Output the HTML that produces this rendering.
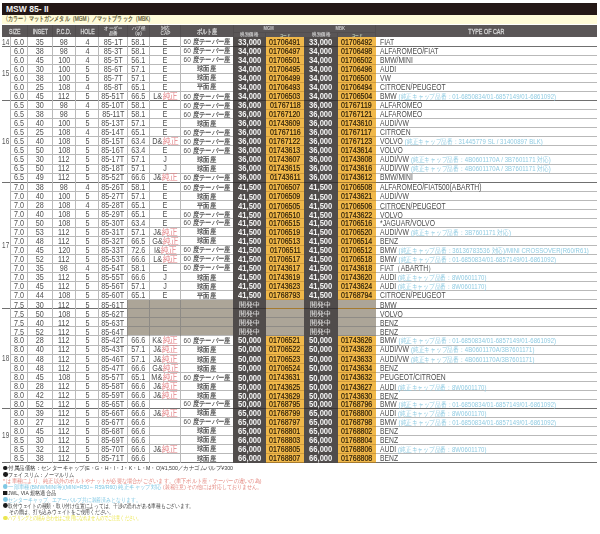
<!DOCTYPE html><html><head><meta charset="utf-8"><style>
*{margin:0;padding:0;box-sizing:border-box}
html,body{width:600px;height:534px;background:#fff;overflow:hidden;position:relative;font-family:"Liberation Sans",sans-serif}
.b{position:absolute}
.t{position:absolute;display:flex;align-items:center;white-space:nowrap;color:#505050;font-size:8.6px;line-height:1}
.t span{display:inline-block;transform:translateY(var(--dy,0px)) scaleX(var(--sx,0.84))}
.t.car span{transform-origin:left center}
.h{color:#d4d4d4;font-size:7px;font-weight:normal;--sx:0.74;--dy:1px;-webkit-text-stroke:0.3px #d8d8d8}
.toc{--sx:0.77}
.h2{color:#cfcfcf;font-size:5.2px;font-weight:bold;text-align:center;line-height:1.0;--sx:0.9}
.h3{color:#d0d0d0;font-size:4.6px;font-weight:bold;--sx:0.9;--dy:1px}
.hc{color:#c8dcc0;font-size:4.2px}
.g{font-size:8.4px;color:#555;--sx:0.76;--dy:0px}
.p{color:#f4f4f4;font-weight:bold;font-size:8.3px;--sx:0.92}
.p.dv{font-size:6.6px;font-weight:normal;--sx:1}
.c{color:#2a1d08;font-size:8.4px;--sx:0.84;-webkit-text-stroke:0.2px #2a1d08}
.cap{--sx:0.85}
.cap i{font-style:normal;color:#e27c80;margin-left:0.6px}
.seat{font-size:7.2px;--sx:0.9}
.seat b{font-weight:normal;-webkit-text-stroke:0.2px #505050}
.car{color:#4a4a4a;font-size:8.4px;--sx:0.81}
.car em{font-style:normal;color:#8fcbe2;font-size:7.4px;letter-spacing:0.1px}
.title{position:absolute;display:flex;align-items:center;color:#f2f0f0;font-weight:bold;font-size:9.2px}
.title span{display:inline-block;transform:scaleX(0.93);transform-origin:left center}
.band{position:absolute;display:flex;align-items:center;color:#58512c;font-size:6.6px;font-weight:normal;-webkit-text-stroke:0.2px #58512c}
.band span{display:inline-block;transform:scaleX(0.733);transform-origin:left center}
.f{position:absolute;left:2.5px;height:8px;font-size:5.8px;color:#3a3a3a;white-space:nowrap;line-height:8px}
.f span{display:inline-block;transform-origin:left center}
.f b{font-weight:normal}
.bu,.sq{display:inline-block;width:4.8px;height:4.8px;border-radius:50%;background:currentColor;margin-right:0.6px;vertical-align:-0.2px}
.sq{border-radius:0;width:4.4px;height:4.4px}
.k{color:#1a1a1a}
.pk{color:#e4877f}
.bl{color:#80c8e4}
.yl{color:#ebe64e}
#wrap{position:absolute;left:0;top:0;width:600px;height:534px;filter:blur(0.3px)}</style></head><body><div id="wrap"><div class="b" style="left:2.00px;top:2.60px;width:595.00px;height:12.30px;background:#241816;"></div>
<div class="title" style="left:6px;top:2.5px;height:12px;"><span>MSW 85- II</span></div>
<div class="b" style="left:2.00px;top:14.90px;width:595.00px;height:9.60px;background:#fffbd8;"></div>
<div class="band" style="left:3px;top:15px;height:9.5px;"><span>〈カラー〉マットガンメタル（MGM）／マットブラック（MBK）</span></div>
<div class="b" style="left:2.00px;top:24.50px;width:595.00px;height:12.80px;background:#5a5657;"></div>
<div class="b" style="left:26.80px;top:24.50px;width:1.00px;height:12.80px;background:#524e4f;"></div>
<div class="b" style="left:52.40px;top:24.50px;width:1.00px;height:12.80px;background:#524e4f;"></div>
<div class="b" style="left:74.80px;top:24.50px;width:1.00px;height:12.80px;background:#524e4f;"></div>
<div class="b" style="left:98.30px;top:24.50px;width:1.00px;height:12.80px;background:#524e4f;"></div>
<div class="b" style="left:126.50px;top:24.50px;width:1.00px;height:12.80px;background:#524e4f;"></div>
<div class="b" style="left:149.10px;top:24.50px;width:1.00px;height:12.80px;background:#524e4f;"></div>
<div class="b" style="left:180.30px;top:24.50px;width:1.00px;height:12.80px;background:#524e4f;"></div>
<div class="b" style="left:232.50px;top:24.50px;width:1.00px;height:12.80px;background:#524e4f;"></div>
<div class="b" style="left:375.20px;top:24.50px;width:1.00px;height:12.80px;background:#524e4f;"></div>
<div class="b" style="left:265.30px;top:32.00px;width:1.00px;height:5.30px;background:#524e4f;"></div>
<div class="b" style="left:337.30px;top:32.00px;width:1.00px;height:5.30px;background:#524e4f;"></div>
<div class="b" style="left:233.00px;top:31.50px;width:142.70px;height:1.00px;background:#524e4f;"></div>
<div class="t h" style="left:2.00px;top:24.50px;width:25.30px;height:12.80px;justify-content:center;"><span>SIZE</span></div>
<div class="t h" style="left:27.30px;top:24.50px;width:25.60px;height:12.80px;justify-content:center;"><span>INSET</span></div>
<div class="t h" style="left:52.90px;top:24.50px;width:22.40px;height:12.80px;justify-content:center;"><span>P.C.D.</span></div>
<div class="t h" style="left:75.30px;top:24.50px;width:23.50px;height:12.80px;justify-content:center;"><span>HOLE</span></div>
<div class="t h2" style="left:98.80px;top:24.50px;width:28.20px;height:12.80px;justify-content:center;"><span>オーダー<br>品番</span></div>
<div class="t h2" style="left:127.00px;top:24.50px;width:22.60px;height:12.80px;justify-content:center;"><span>ハブ径<br>(φ)</span></div>
<div class="t h2" style="left:149.60px;top:24.50px;width:31.20px;height:12.80px;justify-content:center;"><span>対応<br>CAP</span></div>
<div class="t h" style="left:180.80px;top:24.50px;width:52.20px;height:12.80px;justify-content:center;"><span>ボルト座</span></div>
<div class="t h3" style="left:233.00px;top:24.50px;width:71.00px;height:7.50px;justify-content:center;"><span>MGM</span></div>
<div class="t h3" style="left:304.00px;top:24.50px;width:71.70px;height:7.50px;justify-content:center;"><span>MBK</span></div>
<div class="t h3" style="left:233.00px;top:32.00px;width:32.80px;height:5.30px;justify-content:center;"><span>税別価格</span></div>
<div class="t h3 hc" style="left:265.80px;top:32.00px;width:38.20px;height:5.30px;justify-content:center;"><span>コード</span></div>
<div class="t h3" style="left:304.00px;top:32.00px;width:33.80px;height:5.30px;justify-content:center;"><span>税別価格</span></div>
<div class="t h3 hc" style="left:337.80px;top:32.00px;width:37.90px;height:5.30px;justify-content:center;"><span>コード</span></div>
<div class="t h toc" style="left:375.70px;top:24.50px;width:221.30px;height:12.80px;justify-content:center;"><span>TYPE OF CAR</span></div>
<div class="b" style="left:265.80px;top:37.30px;width:38.20px;height:9.05px;background:#f0b84a;"></div>
<div class="b" style="left:337.80px;top:37.30px;width:37.90px;height:9.05px;background:#f0b84a;"></div>
<div class="b" style="left:265.80px;top:46.35px;width:38.20px;height:9.05px;background:#f0b84a;"></div>
<div class="b" style="left:337.80px;top:46.35px;width:37.90px;height:9.05px;background:#f0b84a;"></div>
<div class="b" style="left:265.80px;top:55.40px;width:38.20px;height:9.05px;background:#f0b84a;"></div>
<div class="b" style="left:337.80px;top:55.40px;width:37.90px;height:9.05px;background:#f0b84a;"></div>
<div class="b" style="left:265.80px;top:64.45px;width:38.20px;height:9.05px;background:#f0b84a;"></div>
<div class="b" style="left:337.80px;top:64.45px;width:37.90px;height:9.05px;background:#f0b84a;"></div>
<div class="b" style="left:265.80px;top:73.50px;width:38.20px;height:9.05px;background:#f0b84a;"></div>
<div class="b" style="left:337.80px;top:73.50px;width:37.90px;height:9.05px;background:#f0b84a;"></div>
<div class="b" style="left:265.80px;top:82.55px;width:38.20px;height:9.05px;background:#f0b84a;"></div>
<div class="b" style="left:337.80px;top:82.55px;width:37.90px;height:9.05px;background:#f0b84a;"></div>
<div class="b" style="left:265.80px;top:91.60px;width:38.20px;height:9.05px;background:#f0b84a;"></div>
<div class="b" style="left:337.80px;top:91.60px;width:37.90px;height:9.05px;background:#f0b84a;"></div>
<div class="b" style="left:265.80px;top:100.65px;width:38.20px;height:9.05px;background:#f0b84a;"></div>
<div class="b" style="left:337.80px;top:100.65px;width:37.90px;height:9.05px;background:#f0b84a;"></div>
<div class="b" style="left:265.80px;top:109.70px;width:38.20px;height:9.05px;background:#f0b84a;"></div>
<div class="b" style="left:337.80px;top:109.70px;width:37.90px;height:9.05px;background:#f0b84a;"></div>
<div class="b" style="left:265.80px;top:118.75px;width:38.20px;height:9.05px;background:#f0b84a;"></div>
<div class="b" style="left:337.80px;top:118.75px;width:37.90px;height:9.05px;background:#f0b84a;"></div>
<div class="b" style="left:265.80px;top:127.80px;width:38.20px;height:9.05px;background:#f0b84a;"></div>
<div class="b" style="left:337.80px;top:127.80px;width:37.90px;height:9.05px;background:#f0b84a;"></div>
<div class="b" style="left:265.80px;top:136.85px;width:38.20px;height:9.05px;background:#f0b84a;"></div>
<div class="b" style="left:337.80px;top:136.85px;width:37.90px;height:9.05px;background:#f0b84a;"></div>
<div class="b" style="left:265.80px;top:145.90px;width:38.20px;height:9.05px;background:#f0b84a;"></div>
<div class="b" style="left:337.80px;top:145.90px;width:37.90px;height:9.05px;background:#f0b84a;"></div>
<div class="b" style="left:265.80px;top:154.95px;width:38.20px;height:9.05px;background:#f0b84a;"></div>
<div class="b" style="left:337.80px;top:154.95px;width:37.90px;height:9.05px;background:#f0b84a;"></div>
<div class="b" style="left:265.80px;top:164.00px;width:38.20px;height:9.05px;background:#f0b84a;"></div>
<div class="b" style="left:337.80px;top:164.00px;width:37.90px;height:9.05px;background:#f0b84a;"></div>
<div class="b" style="left:265.80px;top:173.05px;width:38.20px;height:9.05px;background:#f0b84a;"></div>
<div class="b" style="left:337.80px;top:173.05px;width:37.90px;height:9.05px;background:#f0b84a;"></div>
<div class="b" style="left:265.80px;top:182.10px;width:38.20px;height:9.05px;background:#f0b84a;"></div>
<div class="b" style="left:337.80px;top:182.10px;width:37.90px;height:9.05px;background:#f0b84a;"></div>
<div class="b" style="left:265.80px;top:191.15px;width:38.20px;height:9.05px;background:#f0b84a;"></div>
<div class="b" style="left:337.80px;top:191.15px;width:37.90px;height:9.05px;background:#f0b84a;"></div>
<div class="b" style="left:265.80px;top:200.20px;width:38.20px;height:9.05px;background:#f0b84a;"></div>
<div class="b" style="left:337.80px;top:200.20px;width:37.90px;height:9.05px;background:#f0b84a;"></div>
<div class="b" style="left:265.80px;top:209.25px;width:38.20px;height:9.05px;background:#f0b84a;"></div>
<div class="b" style="left:337.80px;top:209.25px;width:37.90px;height:9.05px;background:#f0b84a;"></div>
<div class="b" style="left:265.80px;top:218.30px;width:38.20px;height:9.05px;background:#f0b84a;"></div>
<div class="b" style="left:337.80px;top:218.30px;width:37.90px;height:9.05px;background:#f0b84a;"></div>
<div class="b" style="left:265.80px;top:227.35px;width:38.20px;height:9.05px;background:#f0b84a;"></div>
<div class="b" style="left:337.80px;top:227.35px;width:37.90px;height:9.05px;background:#f0b84a;"></div>
<div class="b" style="left:265.80px;top:236.40px;width:38.20px;height:9.05px;background:#f0b84a;"></div>
<div class="b" style="left:337.80px;top:236.40px;width:37.90px;height:9.05px;background:#f0b84a;"></div>
<div class="b" style="left:265.80px;top:245.45px;width:38.20px;height:9.05px;background:#f0b84a;"></div>
<div class="b" style="left:337.80px;top:245.45px;width:37.90px;height:9.05px;background:#f0b84a;"></div>
<div class="b" style="left:265.80px;top:254.50px;width:38.20px;height:9.05px;background:#f0b84a;"></div>
<div class="b" style="left:337.80px;top:254.50px;width:37.90px;height:9.05px;background:#f0b84a;"></div>
<div class="b" style="left:265.80px;top:263.55px;width:38.20px;height:9.05px;background:#f0b84a;"></div>
<div class="b" style="left:337.80px;top:263.55px;width:37.90px;height:9.05px;background:#f0b84a;"></div>
<div class="b" style="left:265.80px;top:272.60px;width:38.20px;height:9.05px;background:#f0b84a;"></div>
<div class="b" style="left:337.80px;top:272.60px;width:37.90px;height:9.05px;background:#f0b84a;"></div>
<div class="b" style="left:265.80px;top:281.65px;width:38.20px;height:9.05px;background:#f0b84a;"></div>
<div class="b" style="left:337.80px;top:281.65px;width:37.90px;height:9.05px;background:#f0b84a;"></div>
<div class="b" style="left:265.80px;top:290.70px;width:38.20px;height:9.05px;background:#f0b84a;"></div>
<div class="b" style="left:337.80px;top:290.70px;width:37.90px;height:9.05px;background:#f0b84a;"></div>
<div class="b" style="left:127.00px;top:299.75px;width:106.00px;height:9.05px;background:#aca598;"></div>
<div class="b" style="left:265.80px;top:299.75px;width:38.20px;height:9.05px;background:#aca598;"></div>
<div class="b" style="left:337.80px;top:299.75px;width:37.90px;height:9.05px;background:#aca598;"></div>
<div class="b" style="left:127.00px;top:308.80px;width:106.00px;height:9.05px;background:#aca598;"></div>
<div class="b" style="left:265.80px;top:308.80px;width:38.20px;height:9.05px;background:#aca598;"></div>
<div class="b" style="left:337.80px;top:308.80px;width:37.90px;height:9.05px;background:#aca598;"></div>
<div class="b" style="left:127.00px;top:317.85px;width:106.00px;height:9.05px;background:#aca598;"></div>
<div class="b" style="left:265.80px;top:317.85px;width:38.20px;height:9.05px;background:#aca598;"></div>
<div class="b" style="left:337.80px;top:317.85px;width:37.90px;height:9.05px;background:#aca598;"></div>
<div class="b" style="left:127.00px;top:326.90px;width:106.00px;height:9.05px;background:#aca598;"></div>
<div class="b" style="left:265.80px;top:326.90px;width:38.20px;height:9.05px;background:#aca598;"></div>
<div class="b" style="left:337.80px;top:326.90px;width:37.90px;height:9.05px;background:#aca598;"></div>
<div class="b" style="left:265.80px;top:335.95px;width:38.20px;height:9.05px;background:#f0b84a;"></div>
<div class="b" style="left:337.80px;top:335.95px;width:37.90px;height:9.05px;background:#f0b84a;"></div>
<div class="b" style="left:265.80px;top:345.00px;width:38.20px;height:9.05px;background:#f0b84a;"></div>
<div class="b" style="left:337.80px;top:345.00px;width:37.90px;height:9.05px;background:#f0b84a;"></div>
<div class="b" style="left:265.80px;top:354.05px;width:38.20px;height:9.05px;background:#f0b84a;"></div>
<div class="b" style="left:337.80px;top:354.05px;width:37.90px;height:9.05px;background:#f0b84a;"></div>
<div class="b" style="left:265.80px;top:363.10px;width:38.20px;height:9.05px;background:#f0b84a;"></div>
<div class="b" style="left:337.80px;top:363.10px;width:37.90px;height:9.05px;background:#f0b84a;"></div>
<div class="b" style="left:265.80px;top:372.15px;width:38.20px;height:9.05px;background:#f0b84a;"></div>
<div class="b" style="left:337.80px;top:372.15px;width:37.90px;height:9.05px;background:#f0b84a;"></div>
<div class="b" style="left:265.80px;top:381.20px;width:38.20px;height:9.05px;background:#f0b84a;"></div>
<div class="b" style="left:337.80px;top:381.20px;width:37.90px;height:9.05px;background:#f0b84a;"></div>
<div class="b" style="left:265.80px;top:390.25px;width:38.20px;height:9.05px;background:#f0b84a;"></div>
<div class="b" style="left:337.80px;top:390.25px;width:37.90px;height:9.05px;background:#f0b84a;"></div>
<div class="b" style="left:265.80px;top:399.30px;width:38.20px;height:9.05px;background:#f0b84a;"></div>
<div class="b" style="left:337.80px;top:399.30px;width:37.90px;height:9.05px;background:#f0b84a;"></div>
<div class="b" style="left:265.80px;top:408.35px;width:38.20px;height:9.05px;background:#f0b84a;"></div>
<div class="b" style="left:337.80px;top:408.35px;width:37.90px;height:9.05px;background:#f0b84a;"></div>
<div class="b" style="left:265.80px;top:417.40px;width:38.20px;height:9.05px;background:#f0b84a;"></div>
<div class="b" style="left:337.80px;top:417.40px;width:37.90px;height:9.05px;background:#f0b84a;"></div>
<div class="b" style="left:265.80px;top:426.45px;width:38.20px;height:9.05px;background:#f0b84a;"></div>
<div class="b" style="left:337.80px;top:426.45px;width:37.90px;height:9.05px;background:#f0b84a;"></div>
<div class="b" style="left:265.80px;top:435.50px;width:38.20px;height:9.05px;background:#f0b84a;"></div>
<div class="b" style="left:337.80px;top:435.50px;width:37.90px;height:9.05px;background:#f0b84a;"></div>
<div class="b" style="left:265.80px;top:444.55px;width:38.20px;height:9.05px;background:#f0b84a;"></div>
<div class="b" style="left:337.80px;top:444.55px;width:37.90px;height:9.05px;background:#f0b84a;"></div>
<div class="b" style="left:265.80px;top:453.60px;width:38.20px;height:9.05px;background:#f0b84a;"></div>
<div class="b" style="left:337.80px;top:453.60px;width:37.90px;height:9.05px;background:#f0b84a;"></div>
<div class="b" style="left:233.00px;top:37.30px;width:32.80px;height:425.35px;background:#504c4b;"></div>
<div class="b" style="left:304.00px;top:37.30px;width:33.80px;height:425.35px;background:#504c4b;"></div>
<div class="b" style="left:2.00px;top:45.85px;width:231.00px;height:1.00px;background:#707070;"></div>
<div class="b" style="left:265.80px;top:45.85px;width:38.20px;height:1.00px;background:#a57a30;"></div>
<div class="b" style="left:337.80px;top:45.85px;width:37.90px;height:1.00px;background:#a57a30;"></div>
<div class="b" style="left:375.70px;top:45.85px;width:221.30px;height:1.00px;background:#707070;"></div>
<div class="b" style="left:233.00px;top:45.85px;width:32.80px;height:1.00px;background:#383434;"></div>
<div class="b" style="left:304.00px;top:45.85px;width:33.80px;height:1.00px;background:#383434;"></div>
<div class="b" style="left:10.30px;top:54.90px;width:222.70px;height:1.00px;background:#b9b9b9;"></div>
<div class="b" style="left:265.80px;top:54.90px;width:38.20px;height:1.00px;background:#cf9a3c;"></div>
<div class="b" style="left:337.80px;top:54.90px;width:37.90px;height:1.00px;background:#cf9a3c;"></div>
<div class="b" style="left:375.70px;top:54.90px;width:221.30px;height:1.00px;background:#b9b9b9;"></div>
<div class="b" style="left:10.30px;top:63.95px;width:222.70px;height:1.00px;background:#b9b9b9;"></div>
<div class="b" style="left:265.80px;top:63.95px;width:38.20px;height:1.00px;background:#cf9a3c;"></div>
<div class="b" style="left:337.80px;top:63.95px;width:37.90px;height:1.00px;background:#cf9a3c;"></div>
<div class="b" style="left:375.70px;top:63.95px;width:221.30px;height:1.00px;background:#b9b9b9;"></div>
<div class="b" style="left:10.30px;top:73.00px;width:222.70px;height:1.00px;background:#b9b9b9;"></div>
<div class="b" style="left:265.80px;top:73.00px;width:38.20px;height:1.00px;background:#cf9a3c;"></div>
<div class="b" style="left:337.80px;top:73.00px;width:37.90px;height:1.00px;background:#cf9a3c;"></div>
<div class="b" style="left:375.70px;top:73.00px;width:221.30px;height:1.00px;background:#b9b9b9;"></div>
<div class="b" style="left:10.30px;top:82.05px;width:222.70px;height:1.00px;background:#b9b9b9;"></div>
<div class="b" style="left:265.80px;top:82.05px;width:38.20px;height:1.00px;background:#cf9a3c;"></div>
<div class="b" style="left:337.80px;top:82.05px;width:37.90px;height:1.00px;background:#cf9a3c;"></div>
<div class="b" style="left:375.70px;top:82.05px;width:221.30px;height:1.00px;background:#b9b9b9;"></div>
<div class="b" style="left:10.30px;top:91.10px;width:222.70px;height:1.00px;background:#b9b9b9;"></div>
<div class="b" style="left:265.80px;top:91.10px;width:38.20px;height:1.00px;background:#cf9a3c;"></div>
<div class="b" style="left:337.80px;top:91.10px;width:37.90px;height:1.00px;background:#cf9a3c;"></div>
<div class="b" style="left:375.70px;top:91.10px;width:221.30px;height:1.00px;background:#b9b9b9;"></div>
<div class="b" style="left:2.00px;top:100.15px;width:231.00px;height:1.00px;background:#707070;"></div>
<div class="b" style="left:265.80px;top:100.15px;width:38.20px;height:1.00px;background:#a57a30;"></div>
<div class="b" style="left:337.80px;top:100.15px;width:37.90px;height:1.00px;background:#a57a30;"></div>
<div class="b" style="left:375.70px;top:100.15px;width:221.30px;height:1.00px;background:#707070;"></div>
<div class="b" style="left:233.00px;top:100.15px;width:32.80px;height:1.00px;background:#383434;"></div>
<div class="b" style="left:304.00px;top:100.15px;width:33.80px;height:1.00px;background:#383434;"></div>
<div class="b" style="left:10.30px;top:109.20px;width:222.70px;height:1.00px;background:#b9b9b9;"></div>
<div class="b" style="left:265.80px;top:109.20px;width:38.20px;height:1.00px;background:#cf9a3c;"></div>
<div class="b" style="left:337.80px;top:109.20px;width:37.90px;height:1.00px;background:#cf9a3c;"></div>
<div class="b" style="left:375.70px;top:109.20px;width:221.30px;height:1.00px;background:#b9b9b9;"></div>
<div class="b" style="left:10.30px;top:118.25px;width:222.70px;height:1.00px;background:#b9b9b9;"></div>
<div class="b" style="left:265.80px;top:118.25px;width:38.20px;height:1.00px;background:#cf9a3c;"></div>
<div class="b" style="left:337.80px;top:118.25px;width:37.90px;height:1.00px;background:#cf9a3c;"></div>
<div class="b" style="left:375.70px;top:118.25px;width:221.30px;height:1.00px;background:#b9b9b9;"></div>
<div class="b" style="left:10.30px;top:127.30px;width:222.70px;height:1.00px;background:#b9b9b9;"></div>
<div class="b" style="left:265.80px;top:127.30px;width:38.20px;height:1.00px;background:#cf9a3c;"></div>
<div class="b" style="left:337.80px;top:127.30px;width:37.90px;height:1.00px;background:#cf9a3c;"></div>
<div class="b" style="left:375.70px;top:127.30px;width:221.30px;height:1.00px;background:#b9b9b9;"></div>
<div class="b" style="left:10.30px;top:136.35px;width:222.70px;height:1.00px;background:#b9b9b9;"></div>
<div class="b" style="left:265.80px;top:136.35px;width:38.20px;height:1.00px;background:#cf9a3c;"></div>
<div class="b" style="left:337.80px;top:136.35px;width:37.90px;height:1.00px;background:#cf9a3c;"></div>
<div class="b" style="left:375.70px;top:136.35px;width:221.30px;height:1.00px;background:#b9b9b9;"></div>
<div class="b" style="left:10.30px;top:145.40px;width:222.70px;height:1.00px;background:#b9b9b9;"></div>
<div class="b" style="left:265.80px;top:145.40px;width:38.20px;height:1.00px;background:#cf9a3c;"></div>
<div class="b" style="left:337.80px;top:145.40px;width:37.90px;height:1.00px;background:#cf9a3c;"></div>
<div class="b" style="left:375.70px;top:145.40px;width:221.30px;height:1.00px;background:#b9b9b9;"></div>
<div class="b" style="left:10.30px;top:154.45px;width:222.70px;height:1.00px;background:#b9b9b9;"></div>
<div class="b" style="left:265.80px;top:154.45px;width:38.20px;height:1.00px;background:#cf9a3c;"></div>
<div class="b" style="left:337.80px;top:154.45px;width:37.90px;height:1.00px;background:#cf9a3c;"></div>
<div class="b" style="left:375.70px;top:154.45px;width:221.30px;height:1.00px;background:#b9b9b9;"></div>
<div class="b" style="left:10.30px;top:163.50px;width:222.70px;height:1.00px;background:#b9b9b9;"></div>
<div class="b" style="left:265.80px;top:163.50px;width:38.20px;height:1.00px;background:#cf9a3c;"></div>
<div class="b" style="left:337.80px;top:163.50px;width:37.90px;height:1.00px;background:#cf9a3c;"></div>
<div class="b" style="left:375.70px;top:163.50px;width:221.30px;height:1.00px;background:#b9b9b9;"></div>
<div class="b" style="left:10.30px;top:172.55px;width:222.70px;height:1.00px;background:#b9b9b9;"></div>
<div class="b" style="left:265.80px;top:172.55px;width:38.20px;height:1.00px;background:#cf9a3c;"></div>
<div class="b" style="left:337.80px;top:172.55px;width:37.90px;height:1.00px;background:#cf9a3c;"></div>
<div class="b" style="left:375.70px;top:172.55px;width:221.30px;height:1.00px;background:#b9b9b9;"></div>
<div class="b" style="left:2.00px;top:181.60px;width:231.00px;height:1.00px;background:#707070;"></div>
<div class="b" style="left:265.80px;top:181.60px;width:38.20px;height:1.00px;background:#a57a30;"></div>
<div class="b" style="left:337.80px;top:181.60px;width:37.90px;height:1.00px;background:#a57a30;"></div>
<div class="b" style="left:375.70px;top:181.60px;width:221.30px;height:1.00px;background:#707070;"></div>
<div class="b" style="left:233.00px;top:181.60px;width:32.80px;height:1.00px;background:#383434;"></div>
<div class="b" style="left:304.00px;top:181.60px;width:33.80px;height:1.00px;background:#383434;"></div>
<div class="b" style="left:10.30px;top:190.65px;width:222.70px;height:1.00px;background:#b9b9b9;"></div>
<div class="b" style="left:265.80px;top:190.65px;width:38.20px;height:1.00px;background:#cf9a3c;"></div>
<div class="b" style="left:337.80px;top:190.65px;width:37.90px;height:1.00px;background:#cf9a3c;"></div>
<div class="b" style="left:375.70px;top:190.65px;width:221.30px;height:1.00px;background:#b9b9b9;"></div>
<div class="b" style="left:10.30px;top:199.70px;width:222.70px;height:1.00px;background:#b9b9b9;"></div>
<div class="b" style="left:265.80px;top:199.70px;width:38.20px;height:1.00px;background:#cf9a3c;"></div>
<div class="b" style="left:337.80px;top:199.70px;width:37.90px;height:1.00px;background:#cf9a3c;"></div>
<div class="b" style="left:375.70px;top:199.70px;width:221.30px;height:1.00px;background:#b9b9b9;"></div>
<div class="b" style="left:10.30px;top:208.75px;width:222.70px;height:1.00px;background:#b9b9b9;"></div>
<div class="b" style="left:265.80px;top:208.75px;width:38.20px;height:1.00px;background:#cf9a3c;"></div>
<div class="b" style="left:337.80px;top:208.75px;width:37.90px;height:1.00px;background:#cf9a3c;"></div>
<div class="b" style="left:375.70px;top:208.75px;width:221.30px;height:1.00px;background:#b9b9b9;"></div>
<div class="b" style="left:10.30px;top:217.80px;width:222.70px;height:1.00px;background:#b9b9b9;"></div>
<div class="b" style="left:265.80px;top:217.80px;width:38.20px;height:1.00px;background:#cf9a3c;"></div>
<div class="b" style="left:337.80px;top:217.80px;width:37.90px;height:1.00px;background:#cf9a3c;"></div>
<div class="b" style="left:375.70px;top:217.80px;width:221.30px;height:1.00px;background:#b9b9b9;"></div>
<div class="b" style="left:10.30px;top:226.85px;width:222.70px;height:1.00px;background:#b9b9b9;"></div>
<div class="b" style="left:265.80px;top:226.85px;width:38.20px;height:1.00px;background:#cf9a3c;"></div>
<div class="b" style="left:337.80px;top:226.85px;width:37.90px;height:1.00px;background:#cf9a3c;"></div>
<div class="b" style="left:375.70px;top:226.85px;width:221.30px;height:1.00px;background:#b9b9b9;"></div>
<div class="b" style="left:10.30px;top:235.90px;width:222.70px;height:1.00px;background:#b9b9b9;"></div>
<div class="b" style="left:265.80px;top:235.90px;width:38.20px;height:1.00px;background:#cf9a3c;"></div>
<div class="b" style="left:337.80px;top:235.90px;width:37.90px;height:1.00px;background:#cf9a3c;"></div>
<div class="b" style="left:375.70px;top:235.90px;width:221.30px;height:1.00px;background:#b9b9b9;"></div>
<div class="b" style="left:10.30px;top:244.95px;width:222.70px;height:1.00px;background:#b9b9b9;"></div>
<div class="b" style="left:265.80px;top:244.95px;width:38.20px;height:1.00px;background:#cf9a3c;"></div>
<div class="b" style="left:337.80px;top:244.95px;width:37.90px;height:1.00px;background:#cf9a3c;"></div>
<div class="b" style="left:375.70px;top:244.95px;width:221.30px;height:1.00px;background:#b9b9b9;"></div>
<div class="b" style="left:10.30px;top:254.00px;width:222.70px;height:1.00px;background:#b9b9b9;"></div>
<div class="b" style="left:265.80px;top:254.00px;width:38.20px;height:1.00px;background:#cf9a3c;"></div>
<div class="b" style="left:337.80px;top:254.00px;width:37.90px;height:1.00px;background:#cf9a3c;"></div>
<div class="b" style="left:375.70px;top:254.00px;width:221.30px;height:1.00px;background:#b9b9b9;"></div>
<div class="b" style="left:10.30px;top:263.05px;width:222.70px;height:1.00px;background:#b9b9b9;"></div>
<div class="b" style="left:265.80px;top:263.05px;width:38.20px;height:1.00px;background:#cf9a3c;"></div>
<div class="b" style="left:337.80px;top:263.05px;width:37.90px;height:1.00px;background:#cf9a3c;"></div>
<div class="b" style="left:375.70px;top:263.05px;width:221.30px;height:1.00px;background:#b9b9b9;"></div>
<div class="b" style="left:10.30px;top:272.10px;width:222.70px;height:1.00px;background:#b9b9b9;"></div>
<div class="b" style="left:265.80px;top:272.10px;width:38.20px;height:1.00px;background:#cf9a3c;"></div>
<div class="b" style="left:337.80px;top:272.10px;width:37.90px;height:1.00px;background:#cf9a3c;"></div>
<div class="b" style="left:375.70px;top:272.10px;width:221.30px;height:1.00px;background:#b9b9b9;"></div>
<div class="b" style="left:10.30px;top:281.15px;width:222.70px;height:1.00px;background:#b9b9b9;"></div>
<div class="b" style="left:265.80px;top:281.15px;width:38.20px;height:1.00px;background:#cf9a3c;"></div>
<div class="b" style="left:337.80px;top:281.15px;width:37.90px;height:1.00px;background:#cf9a3c;"></div>
<div class="b" style="left:375.70px;top:281.15px;width:221.30px;height:1.00px;background:#b9b9b9;"></div>
<div class="b" style="left:10.30px;top:290.20px;width:222.70px;height:1.00px;background:#b9b9b9;"></div>
<div class="b" style="left:265.80px;top:290.20px;width:38.20px;height:1.00px;background:#cf9a3c;"></div>
<div class="b" style="left:337.80px;top:290.20px;width:37.90px;height:1.00px;background:#cf9a3c;"></div>
<div class="b" style="left:375.70px;top:290.20px;width:221.30px;height:1.00px;background:#b9b9b9;"></div>
<div class="b" style="left:10.30px;top:299.25px;width:222.70px;height:1.00px;background:#b9b9b9;"></div>
<div class="b" style="left:265.80px;top:299.25px;width:38.20px;height:1.00px;background:#cf9a3c;"></div>
<div class="b" style="left:337.80px;top:299.25px;width:37.90px;height:1.00px;background:#cf9a3c;"></div>
<div class="b" style="left:375.70px;top:299.25px;width:221.30px;height:1.00px;background:#b9b9b9;"></div>
<div class="b" style="left:2.00px;top:308.30px;width:231.00px;height:1.00px;background:#707070;"></div>
<div class="b" style="left:265.80px;top:308.30px;width:38.20px;height:1.00px;background:#a57a30;"></div>
<div class="b" style="left:337.80px;top:308.30px;width:37.90px;height:1.00px;background:#a57a30;"></div>
<div class="b" style="left:375.70px;top:308.30px;width:221.30px;height:1.00px;background:#707070;"></div>
<div class="b" style="left:233.00px;top:308.30px;width:32.80px;height:1.00px;background:#383434;"></div>
<div class="b" style="left:304.00px;top:308.30px;width:33.80px;height:1.00px;background:#383434;"></div>
<div class="b" style="left:10.30px;top:317.35px;width:222.70px;height:1.00px;background:#b9b9b9;"></div>
<div class="b" style="left:265.80px;top:317.35px;width:38.20px;height:1.00px;background:#8e8b86;"></div>
<div class="b" style="left:337.80px;top:317.35px;width:37.90px;height:1.00px;background:#8e8b86;"></div>
<div class="b" style="left:375.70px;top:317.35px;width:221.30px;height:1.00px;background:#b9b9b9;"></div>
<div class="b" style="left:10.30px;top:326.40px;width:222.70px;height:1.00px;background:#b9b9b9;"></div>
<div class="b" style="left:265.80px;top:326.40px;width:38.20px;height:1.00px;background:#8e8b86;"></div>
<div class="b" style="left:337.80px;top:326.40px;width:37.90px;height:1.00px;background:#8e8b86;"></div>
<div class="b" style="left:375.70px;top:326.40px;width:221.30px;height:1.00px;background:#b9b9b9;"></div>
<div class="b" style="left:10.30px;top:335.45px;width:222.70px;height:1.00px;background:#b9b9b9;"></div>
<div class="b" style="left:265.80px;top:335.45px;width:38.20px;height:1.00px;background:#8e8b86;"></div>
<div class="b" style="left:337.80px;top:335.45px;width:37.90px;height:1.00px;background:#8e8b86;"></div>
<div class="b" style="left:375.70px;top:335.45px;width:221.30px;height:1.00px;background:#b9b9b9;"></div>
<div class="b" style="left:10.30px;top:344.50px;width:222.70px;height:1.00px;background:#b9b9b9;"></div>
<div class="b" style="left:265.80px;top:344.50px;width:38.20px;height:1.00px;background:#cf9a3c;"></div>
<div class="b" style="left:337.80px;top:344.50px;width:37.90px;height:1.00px;background:#cf9a3c;"></div>
<div class="b" style="left:375.70px;top:344.50px;width:221.30px;height:1.00px;background:#b9b9b9;"></div>
<div class="b" style="left:10.30px;top:353.55px;width:222.70px;height:1.00px;background:#b9b9b9;"></div>
<div class="b" style="left:265.80px;top:353.55px;width:38.20px;height:1.00px;background:#cf9a3c;"></div>
<div class="b" style="left:337.80px;top:353.55px;width:37.90px;height:1.00px;background:#cf9a3c;"></div>
<div class="b" style="left:375.70px;top:353.55px;width:221.30px;height:1.00px;background:#b9b9b9;"></div>
<div class="b" style="left:10.30px;top:362.60px;width:222.70px;height:1.00px;background:#b9b9b9;"></div>
<div class="b" style="left:265.80px;top:362.60px;width:38.20px;height:1.00px;background:#cf9a3c;"></div>
<div class="b" style="left:337.80px;top:362.60px;width:37.90px;height:1.00px;background:#cf9a3c;"></div>
<div class="b" style="left:375.70px;top:362.60px;width:221.30px;height:1.00px;background:#b9b9b9;"></div>
<div class="b" style="left:10.30px;top:371.65px;width:222.70px;height:1.00px;background:#b9b9b9;"></div>
<div class="b" style="left:265.80px;top:371.65px;width:38.20px;height:1.00px;background:#cf9a3c;"></div>
<div class="b" style="left:337.80px;top:371.65px;width:37.90px;height:1.00px;background:#cf9a3c;"></div>
<div class="b" style="left:375.70px;top:371.65px;width:221.30px;height:1.00px;background:#b9b9b9;"></div>
<div class="b" style="left:10.30px;top:380.70px;width:222.70px;height:1.00px;background:#b9b9b9;"></div>
<div class="b" style="left:265.80px;top:380.70px;width:38.20px;height:1.00px;background:#cf9a3c;"></div>
<div class="b" style="left:337.80px;top:380.70px;width:37.90px;height:1.00px;background:#cf9a3c;"></div>
<div class="b" style="left:375.70px;top:380.70px;width:221.30px;height:1.00px;background:#b9b9b9;"></div>
<div class="b" style="left:10.30px;top:389.75px;width:222.70px;height:1.00px;background:#b9b9b9;"></div>
<div class="b" style="left:265.80px;top:389.75px;width:38.20px;height:1.00px;background:#cf9a3c;"></div>
<div class="b" style="left:337.80px;top:389.75px;width:37.90px;height:1.00px;background:#cf9a3c;"></div>
<div class="b" style="left:375.70px;top:389.75px;width:221.30px;height:1.00px;background:#b9b9b9;"></div>
<div class="b" style="left:10.30px;top:398.80px;width:222.70px;height:1.00px;background:#b9b9b9;"></div>
<div class="b" style="left:265.80px;top:398.80px;width:38.20px;height:1.00px;background:#cf9a3c;"></div>
<div class="b" style="left:337.80px;top:398.80px;width:37.90px;height:1.00px;background:#cf9a3c;"></div>
<div class="b" style="left:375.70px;top:398.80px;width:221.30px;height:1.00px;background:#b9b9b9;"></div>
<div class="b" style="left:2.00px;top:407.85px;width:231.00px;height:1.00px;background:#707070;"></div>
<div class="b" style="left:265.80px;top:407.85px;width:38.20px;height:1.00px;background:#a57a30;"></div>
<div class="b" style="left:337.80px;top:407.85px;width:37.90px;height:1.00px;background:#a57a30;"></div>
<div class="b" style="left:375.70px;top:407.85px;width:221.30px;height:1.00px;background:#707070;"></div>
<div class="b" style="left:233.00px;top:407.85px;width:32.80px;height:1.00px;background:#383434;"></div>
<div class="b" style="left:304.00px;top:407.85px;width:33.80px;height:1.00px;background:#383434;"></div>
<div class="b" style="left:10.30px;top:416.90px;width:222.70px;height:1.00px;background:#b9b9b9;"></div>
<div class="b" style="left:265.80px;top:416.90px;width:38.20px;height:1.00px;background:#cf9a3c;"></div>
<div class="b" style="left:337.80px;top:416.90px;width:37.90px;height:1.00px;background:#cf9a3c;"></div>
<div class="b" style="left:375.70px;top:416.90px;width:221.30px;height:1.00px;background:#b9b9b9;"></div>
<div class="b" style="left:10.30px;top:425.95px;width:222.70px;height:1.00px;background:#b9b9b9;"></div>
<div class="b" style="left:265.80px;top:425.95px;width:38.20px;height:1.00px;background:#cf9a3c;"></div>
<div class="b" style="left:337.80px;top:425.95px;width:37.90px;height:1.00px;background:#cf9a3c;"></div>
<div class="b" style="left:375.70px;top:425.95px;width:221.30px;height:1.00px;background:#b9b9b9;"></div>
<div class="b" style="left:10.30px;top:435.00px;width:222.70px;height:1.00px;background:#b9b9b9;"></div>
<div class="b" style="left:265.80px;top:435.00px;width:38.20px;height:1.00px;background:#cf9a3c;"></div>
<div class="b" style="left:337.80px;top:435.00px;width:37.90px;height:1.00px;background:#cf9a3c;"></div>
<div class="b" style="left:375.70px;top:435.00px;width:221.30px;height:1.00px;background:#b9b9b9;"></div>
<div class="b" style="left:10.30px;top:444.05px;width:222.70px;height:1.00px;background:#b9b9b9;"></div>
<div class="b" style="left:265.80px;top:444.05px;width:38.20px;height:1.00px;background:#cf9a3c;"></div>
<div class="b" style="left:337.80px;top:444.05px;width:37.90px;height:1.00px;background:#cf9a3c;"></div>
<div class="b" style="left:375.70px;top:444.05px;width:221.30px;height:1.00px;background:#b9b9b9;"></div>
<div class="b" style="left:10.30px;top:453.10px;width:222.70px;height:1.00px;background:#b9b9b9;"></div>
<div class="b" style="left:265.80px;top:453.10px;width:38.20px;height:1.00px;background:#cf9a3c;"></div>
<div class="b" style="left:337.80px;top:453.10px;width:37.90px;height:1.00px;background:#cf9a3c;"></div>
<div class="b" style="left:375.70px;top:453.10px;width:221.30px;height:1.00px;background:#b9b9b9;"></div>
<div class="b" style="left:2.00px;top:462.15px;width:231.00px;height:1.00px;background:#707070;"></div>
<div class="b" style="left:265.80px;top:462.15px;width:38.20px;height:1.00px;background:#a57a30;"></div>
<div class="b" style="left:337.80px;top:462.15px;width:37.90px;height:1.00px;background:#a57a30;"></div>
<div class="b" style="left:375.70px;top:462.15px;width:221.30px;height:1.00px;background:#707070;"></div>
<div class="b" style="left:9.80px;top:37.30px;width:1.00px;height:425.35px;background:#b9b9b9;"></div>
<div class="b" style="left:26.80px;top:37.30px;width:1.00px;height:425.35px;background:#b9b9b9;"></div>
<div class="b" style="left:52.40px;top:37.30px;width:1.00px;height:425.35px;background:#b9b9b9;"></div>
<div class="b" style="left:74.80px;top:37.30px;width:1.00px;height:425.35px;background:#b9b9b9;"></div>
<div class="b" style="left:98.30px;top:37.30px;width:1.00px;height:425.35px;background:#b9b9b9;"></div>
<div class="b" style="left:126.50px;top:37.30px;width:1.00px;height:425.35px;background:#b9b9b9;"></div>
<div class="b" style="left:149.10px;top:37.30px;width:1.00px;height:425.35px;background:#b9b9b9;"></div>
<div class="b" style="left:180.30px;top:37.30px;width:1.00px;height:425.35px;background:#b9b9b9;"></div>
<div class="b" style="left:126.50px;top:299.75px;width:1.00px;height:36.20px;background:#8e8b86;"></div>
<div class="b" style="left:149.10px;top:299.75px;width:1.00px;height:36.20px;background:#8e8b86;"></div>
<div class="b" style="left:180.30px;top:299.75px;width:1.00px;height:36.20px;background:#8e8b86;"></div>
<div class="b" style="left:127.00px;top:308.30px;width:106.00px;height:1.00px;background:#8e8b86;"></div>
<div class="b" style="left:127.00px;top:317.35px;width:106.00px;height:1.00px;background:#8e8b86;"></div>
<div class="b" style="left:127.00px;top:326.40px;width:106.00px;height:1.00px;background:#8e8b86;"></div>
<div class="t g" style="left:2.00px;top:37.30px;width:8.30px;height:9.05px;justify-content:center;"><span>14</span></div>
<div class="t g" style="left:2.00px;top:46.35px;width:8.30px;height:54.30px;justify-content:center;"><span>15</span></div>
<div class="t g" style="left:2.00px;top:100.65px;width:8.30px;height:81.45px;justify-content:center;"><span>16</span></div>
<div class="t g" style="left:2.00px;top:182.10px;width:8.30px;height:126.70px;justify-content:center;"><span>17</span></div>
<div class="t g" style="left:2.00px;top:308.80px;width:8.30px;height:99.55px;justify-content:center;"><span>18</span></div>
<div class="t g" style="left:2.00px;top:408.35px;width:8.30px;height:54.30px;justify-content:center;"><span>19</span></div>
<div class="t " style="left:10.30px;top:37.30px;width:17.00px;height:9.05px;justify-content:center;"><span>6.0</span></div>
<div class="t " style="left:27.30px;top:37.30px;width:25.60px;height:9.05px;justify-content:center;"><span>35</span></div>
<div class="t " style="left:52.90px;top:37.30px;width:22.40px;height:9.05px;justify-content:center;"><span>98</span></div>
<div class="t " style="left:75.30px;top:37.30px;width:23.50px;height:9.05px;justify-content:center;"><span>4</span></div>
<div class="t " style="left:98.80px;top:37.30px;width:28.20px;height:9.05px;justify-content:center;"><span>85-1T</span></div>
<div class="t " style="left:127.00px;top:37.30px;width:22.60px;height:9.05px;justify-content:center;"><span>58.1</span></div>
<div class="t " style="left:149.60px;top:37.30px;width:31.20px;height:9.05px;justify-content:center;"><span>E</span></div>
<div class="t seat" style="left:180.80px;top:37.30px;width:52.20px;height:9.05px;justify-content:center;"><span>60 <b>度テーパー座</b></span></div>
<div class="t p" style="left:233.00px;top:37.30px;width:32.80px;height:9.05px;justify-content:center;"><span>33,000</span></div>
<div class="t c" style="left:265.80px;top:37.30px;width:38.20px;height:9.05px;justify-content:center;"><span>01706491</span></div>
<div class="t p" style="left:304.00px;top:37.30px;width:33.80px;height:9.05px;justify-content:center;"><span>33,000</span></div>
<div class="t c" style="left:337.80px;top:37.30px;width:37.90px;height:9.05px;justify-content:center;"><span>01706492</span></div>
<div class="t car" style="left:379.70px;top:37.30px;width:217.30px;height:9.05px;justify-content:flex-start;"><span>FIAT</span></div>
<div class="t " style="left:10.30px;top:46.35px;width:17.00px;height:9.05px;justify-content:center;"><span>6.0</span></div>
<div class="t " style="left:27.30px;top:46.35px;width:25.60px;height:9.05px;justify-content:center;"><span>38</span></div>
<div class="t " style="left:52.90px;top:46.35px;width:22.40px;height:9.05px;justify-content:center;"><span>98</span></div>
<div class="t " style="left:75.30px;top:46.35px;width:23.50px;height:9.05px;justify-content:center;"><span>4</span></div>
<div class="t " style="left:98.80px;top:46.35px;width:28.20px;height:9.05px;justify-content:center;"><span>85-3T</span></div>
<div class="t " style="left:127.00px;top:46.35px;width:22.60px;height:9.05px;justify-content:center;"><span>58.1</span></div>
<div class="t " style="left:149.60px;top:46.35px;width:31.20px;height:9.05px;justify-content:center;"><span>E</span></div>
<div class="t seat" style="left:180.80px;top:46.35px;width:52.20px;height:9.05px;justify-content:center;"><span>60 <b>度テーパー座</b></span></div>
<div class="t p" style="left:233.00px;top:46.35px;width:32.80px;height:9.05px;justify-content:center;"><span>34,000</span></div>
<div class="t c" style="left:265.80px;top:46.35px;width:38.20px;height:9.05px;justify-content:center;"><span>01706497</span></div>
<div class="t p" style="left:304.00px;top:46.35px;width:33.80px;height:9.05px;justify-content:center;"><span>34,000</span></div>
<div class="t c" style="left:337.80px;top:46.35px;width:37.90px;height:9.05px;justify-content:center;"><span>01706498</span></div>
<div class="t car" style="left:379.70px;top:46.35px;width:217.30px;height:9.05px;justify-content:flex-start;"><span>ALFAROMEO/FIAT</span></div>
<div class="t " style="left:10.30px;top:55.40px;width:17.00px;height:9.05px;justify-content:center;"><span>6.0</span></div>
<div class="t " style="left:27.30px;top:55.40px;width:25.60px;height:9.05px;justify-content:center;"><span>45</span></div>
<div class="t " style="left:52.90px;top:55.40px;width:22.40px;height:9.05px;justify-content:center;"><span>100</span></div>
<div class="t " style="left:75.30px;top:55.40px;width:23.50px;height:9.05px;justify-content:center;"><span>4</span></div>
<div class="t " style="left:98.80px;top:55.40px;width:28.20px;height:9.05px;justify-content:center;"><span>85-5T</span></div>
<div class="t " style="left:127.00px;top:55.40px;width:22.60px;height:9.05px;justify-content:center;"><span>56.1</span></div>
<div class="t " style="left:149.60px;top:55.40px;width:31.20px;height:9.05px;justify-content:center;"><span>E</span></div>
<div class="t seat" style="left:180.80px;top:55.40px;width:52.20px;height:9.05px;justify-content:center;"><span>60 <b>度テーパー座</b></span></div>
<div class="t p" style="left:233.00px;top:55.40px;width:32.80px;height:9.05px;justify-content:center;"><span>34,000</span></div>
<div class="t c" style="left:265.80px;top:55.40px;width:38.20px;height:9.05px;justify-content:center;"><span>01706501</span></div>
<div class="t p" style="left:304.00px;top:55.40px;width:33.80px;height:9.05px;justify-content:center;"><span>34,000</span></div>
<div class="t c" style="left:337.80px;top:55.40px;width:37.90px;height:9.05px;justify-content:center;"><span>01706502</span></div>
<div class="t car" style="left:379.70px;top:55.40px;width:217.30px;height:9.05px;justify-content:flex-start;"><span>BMW/MINI</span></div>
<div class="t " style="left:10.30px;top:64.45px;width:17.00px;height:9.05px;justify-content:center;"><span>6.0</span></div>
<div class="t " style="left:27.30px;top:64.45px;width:25.60px;height:9.05px;justify-content:center;"><span>30</span></div>
<div class="t " style="left:52.90px;top:64.45px;width:22.40px;height:9.05px;justify-content:center;"><span>100</span></div>
<div class="t " style="left:75.30px;top:64.45px;width:23.50px;height:9.05px;justify-content:center;"><span>5</span></div>
<div class="t " style="left:98.80px;top:64.45px;width:28.20px;height:9.05px;justify-content:center;"><span>85-6T</span></div>
<div class="t " style="left:127.00px;top:64.45px;width:22.60px;height:9.05px;justify-content:center;"><span>57.1</span></div>
<div class="t " style="left:149.60px;top:64.45px;width:31.20px;height:9.05px;justify-content:center;"><span>E</span></div>
<div class="t seat" style="left:180.80px;top:64.45px;width:52.20px;height:9.05px;justify-content:center;"><span><b>球面座</b></span></div>
<div class="t p" style="left:233.00px;top:64.45px;width:32.80px;height:9.05px;justify-content:center;"><span>34,000</span></div>
<div class="t c" style="left:265.80px;top:64.45px;width:38.20px;height:9.05px;justify-content:center;"><span>01706495</span></div>
<div class="t p" style="left:304.00px;top:64.45px;width:33.80px;height:9.05px;justify-content:center;"><span>34,000</span></div>
<div class="t c" style="left:337.80px;top:64.45px;width:37.90px;height:9.05px;justify-content:center;"><span>01706496</span></div>
<div class="t car" style="left:379.70px;top:64.45px;width:217.30px;height:9.05px;justify-content:flex-start;"><span>AUDI</span></div>
<div class="t " style="left:10.30px;top:73.50px;width:17.00px;height:9.05px;justify-content:center;"><span>6.0</span></div>
<div class="t " style="left:27.30px;top:73.50px;width:25.60px;height:9.05px;justify-content:center;"><span>38</span></div>
<div class="t " style="left:52.90px;top:73.50px;width:22.40px;height:9.05px;justify-content:center;"><span>100</span></div>
<div class="t " style="left:75.30px;top:73.50px;width:23.50px;height:9.05px;justify-content:center;"><span>5</span></div>
<div class="t " style="left:98.80px;top:73.50px;width:28.20px;height:9.05px;justify-content:center;"><span>85-7T</span></div>
<div class="t " style="left:127.00px;top:73.50px;width:22.60px;height:9.05px;justify-content:center;"><span>57.1</span></div>
<div class="t " style="left:149.60px;top:73.50px;width:31.20px;height:9.05px;justify-content:center;"><span>E</span></div>
<div class="t seat" style="left:180.80px;top:73.50px;width:52.20px;height:9.05px;justify-content:center;"><span><b>球面座</b></span></div>
<div class="t p" style="left:233.00px;top:73.50px;width:32.80px;height:9.05px;justify-content:center;"><span>34,000</span></div>
<div class="t c" style="left:265.80px;top:73.50px;width:38.20px;height:9.05px;justify-content:center;"><span>01706499</span></div>
<div class="t p" style="left:304.00px;top:73.50px;width:33.80px;height:9.05px;justify-content:center;"><span>34,000</span></div>
<div class="t c" style="left:337.80px;top:73.50px;width:37.90px;height:9.05px;justify-content:center;"><span>01706500</span></div>
<div class="t car" style="left:379.70px;top:73.50px;width:217.30px;height:9.05px;justify-content:flex-start;"><span>VW</span></div>
<div class="t " style="left:10.30px;top:82.55px;width:17.00px;height:9.05px;justify-content:center;"><span>6.0</span></div>
<div class="t " style="left:27.30px;top:82.55px;width:25.60px;height:9.05px;justify-content:center;"><span>25</span></div>
<div class="t " style="left:52.90px;top:82.55px;width:22.40px;height:9.05px;justify-content:center;"><span>108</span></div>
<div class="t " style="left:75.30px;top:82.55px;width:23.50px;height:9.05px;justify-content:center;"><span>4</span></div>
<div class="t " style="left:98.80px;top:82.55px;width:28.20px;height:9.05px;justify-content:center;"><span>85-8T</span></div>
<div class="t " style="left:127.00px;top:82.55px;width:22.60px;height:9.05px;justify-content:center;"><span>65.1</span></div>
<div class="t " style="left:149.60px;top:82.55px;width:31.20px;height:9.05px;justify-content:center;"><span>E</span></div>
<div class="t seat" style="left:180.80px;top:82.55px;width:52.20px;height:9.05px;justify-content:center;"><span><b>平面座</b></span></div>
<div class="t p" style="left:233.00px;top:82.55px;width:32.80px;height:9.05px;justify-content:center;"><span>34,000</span></div>
<div class="t c" style="left:265.80px;top:82.55px;width:38.20px;height:9.05px;justify-content:center;"><span>01706493</span></div>
<div class="t p" style="left:304.00px;top:82.55px;width:33.80px;height:9.05px;justify-content:center;"><span>34,000</span></div>
<div class="t c" style="left:337.80px;top:82.55px;width:37.90px;height:9.05px;justify-content:center;"><span>01706494</span></div>
<div class="t car" style="left:379.70px;top:82.55px;width:217.30px;height:9.05px;justify-content:flex-start;"><span>CITROEN/PEUGEOT</span></div>
<div class="t " style="left:10.30px;top:91.60px;width:17.00px;height:9.05px;justify-content:center;"><span>6.0</span></div>
<div class="t " style="left:27.30px;top:91.60px;width:25.60px;height:9.05px;justify-content:center;"><span>45</span></div>
<div class="t " style="left:52.90px;top:91.60px;width:22.40px;height:9.05px;justify-content:center;"><span>112</span></div>
<div class="t " style="left:75.30px;top:91.60px;width:23.50px;height:9.05px;justify-content:center;"><span>5</span></div>
<div class="t " style="left:98.80px;top:91.60px;width:28.20px;height:9.05px;justify-content:center;"><span>85-51T</span></div>
<div class="t " style="left:127.00px;top:91.60px;width:22.60px;height:9.05px;justify-content:center;"><span>66.5</span></div>
<div class="t cap" style="left:149.60px;top:91.60px;width:31.20px;height:9.05px;justify-content:center;"><span>L&amp;<i>純正</i></span></div>
<div class="t seat" style="left:180.80px;top:91.60px;width:52.20px;height:9.05px;justify-content:center;"><span>60 <b>度テーパー座</b></span></div>
<div class="t p" style="left:233.00px;top:91.60px;width:32.80px;height:9.05px;justify-content:center;"><span>34,000</span></div>
<div class="t c" style="left:265.80px;top:91.60px;width:38.20px;height:9.05px;justify-content:center;"><span>01706503</span></div>
<div class="t p" style="left:304.00px;top:91.60px;width:33.80px;height:9.05px;justify-content:center;"><span>34,000</span></div>
<div class="t c" style="left:337.80px;top:91.60px;width:37.90px;height:9.05px;justify-content:center;"><span>01706504</span></div>
<div class="t car" style="left:379.70px;top:91.60px;width:217.30px;height:9.05px;justify-content:flex-start;"><span>BMW <em>(純正キャップ品番：01-6850834/01-6857149/01-6861092)</em></span></div>
<div class="t " style="left:10.30px;top:100.65px;width:17.00px;height:9.05px;justify-content:center;"><span>6.5</span></div>
<div class="t " style="left:27.30px;top:100.65px;width:25.60px;height:9.05px;justify-content:center;"><span>30</span></div>
<div class="t " style="left:52.90px;top:100.65px;width:22.40px;height:9.05px;justify-content:center;"><span>98</span></div>
<div class="t " style="left:75.30px;top:100.65px;width:23.50px;height:9.05px;justify-content:center;"><span>4</span></div>
<div class="t " style="left:98.80px;top:100.65px;width:28.20px;height:9.05px;justify-content:center;"><span>85-10T</span></div>
<div class="t " style="left:127.00px;top:100.65px;width:22.60px;height:9.05px;justify-content:center;"><span>58.1</span></div>
<div class="t " style="left:149.60px;top:100.65px;width:31.20px;height:9.05px;justify-content:center;"><span>E</span></div>
<div class="t seat" style="left:180.80px;top:100.65px;width:52.20px;height:9.05px;justify-content:center;"><span>60 <b>度テーパー座</b></span></div>
<div class="t p" style="left:233.00px;top:100.65px;width:32.80px;height:9.05px;justify-content:center;"><span>36,000</span></div>
<div class="t c" style="left:265.80px;top:100.65px;width:38.20px;height:9.05px;justify-content:center;"><span>01767118</span></div>
<div class="t p" style="left:304.00px;top:100.65px;width:33.80px;height:9.05px;justify-content:center;"><span>36,000</span></div>
<div class="t c" style="left:337.80px;top:100.65px;width:37.90px;height:9.05px;justify-content:center;"><span>01767119</span></div>
<div class="t car" style="left:379.70px;top:100.65px;width:217.30px;height:9.05px;justify-content:flex-start;"><span>ALFAROMEO</span></div>
<div class="t " style="left:10.30px;top:109.70px;width:17.00px;height:9.05px;justify-content:center;"><span>6.5</span></div>
<div class="t " style="left:27.30px;top:109.70px;width:25.60px;height:9.05px;justify-content:center;"><span>38</span></div>
<div class="t " style="left:52.90px;top:109.70px;width:22.40px;height:9.05px;justify-content:center;"><span>98</span></div>
<div class="t " style="left:75.30px;top:109.70px;width:23.50px;height:9.05px;justify-content:center;"><span>5</span></div>
<div class="t " style="left:98.80px;top:109.70px;width:28.20px;height:9.05px;justify-content:center;"><span>85-11T</span></div>
<div class="t " style="left:127.00px;top:109.70px;width:22.60px;height:9.05px;justify-content:center;"><span>58.1</span></div>
<div class="t " style="left:149.60px;top:109.70px;width:31.20px;height:9.05px;justify-content:center;"><span>E</span></div>
<div class="t seat" style="left:180.80px;top:109.70px;width:52.20px;height:9.05px;justify-content:center;"><span>60 <b>度テーパー座</b></span></div>
<div class="t p" style="left:233.00px;top:109.70px;width:32.80px;height:9.05px;justify-content:center;"><span>36,000</span></div>
<div class="t c" style="left:265.80px;top:109.70px;width:38.20px;height:9.05px;justify-content:center;"><span>01767120</span></div>
<div class="t p" style="left:304.00px;top:109.70px;width:33.80px;height:9.05px;justify-content:center;"><span>36,000</span></div>
<div class="t c" style="left:337.80px;top:109.70px;width:37.90px;height:9.05px;justify-content:center;"><span>01767121</span></div>
<div class="t car" style="left:379.70px;top:109.70px;width:217.30px;height:9.05px;justify-content:flex-start;"><span>ALFAROMEO</span></div>
<div class="t " style="left:10.30px;top:118.75px;width:17.00px;height:9.05px;justify-content:center;"><span>6.5</span></div>
<div class="t " style="left:27.30px;top:118.75px;width:25.60px;height:9.05px;justify-content:center;"><span>40</span></div>
<div class="t " style="left:52.90px;top:118.75px;width:22.40px;height:9.05px;justify-content:center;"><span>100</span></div>
<div class="t " style="left:75.30px;top:118.75px;width:23.50px;height:9.05px;justify-content:center;"><span>5</span></div>
<div class="t " style="left:98.80px;top:118.75px;width:28.20px;height:9.05px;justify-content:center;"><span>85-13T</span></div>
<div class="t " style="left:127.00px;top:118.75px;width:22.60px;height:9.05px;justify-content:center;"><span>57.1</span></div>
<div class="t " style="left:149.60px;top:118.75px;width:31.20px;height:9.05px;justify-content:center;"><span>E</span></div>
<div class="t seat" style="left:180.80px;top:118.75px;width:52.20px;height:9.05px;justify-content:center;"><span><b>球面座</b></span></div>
<div class="t p" style="left:233.00px;top:118.75px;width:32.80px;height:9.05px;justify-content:center;"><span>36,000</span></div>
<div class="t c" style="left:265.80px;top:118.75px;width:38.20px;height:9.05px;justify-content:center;"><span>01743609</span></div>
<div class="t p" style="left:304.00px;top:118.75px;width:33.80px;height:9.05px;justify-content:center;"><span>36,000</span></div>
<div class="t c" style="left:337.80px;top:118.75px;width:37.90px;height:9.05px;justify-content:center;"><span>01743610</span></div>
<div class="t car" style="left:379.70px;top:118.75px;width:217.30px;height:9.05px;justify-content:flex-start;"><span>AUDI/VW</span></div>
<div class="t " style="left:10.30px;top:127.80px;width:17.00px;height:9.05px;justify-content:center;"><span>6.5</span></div>
<div class="t " style="left:27.30px;top:127.80px;width:25.60px;height:9.05px;justify-content:center;"><span>25</span></div>
<div class="t " style="left:52.90px;top:127.80px;width:22.40px;height:9.05px;justify-content:center;"><span>108</span></div>
<div class="t " style="left:75.30px;top:127.80px;width:23.50px;height:9.05px;justify-content:center;"><span>4</span></div>
<div class="t " style="left:98.80px;top:127.80px;width:28.20px;height:9.05px;justify-content:center;"><span>85-14T</span></div>
<div class="t " style="left:127.00px;top:127.80px;width:22.60px;height:9.05px;justify-content:center;"><span>65.1</span></div>
<div class="t " style="left:149.60px;top:127.80px;width:31.20px;height:9.05px;justify-content:center;"><span>E</span></div>
<div class="t seat" style="left:180.80px;top:127.80px;width:52.20px;height:9.05px;justify-content:center;"><span>60 <b>度テーパー座</b></span></div>
<div class="t p" style="left:233.00px;top:127.80px;width:32.80px;height:9.05px;justify-content:center;"><span>36,000</span></div>
<div class="t c" style="left:265.80px;top:127.80px;width:38.20px;height:9.05px;justify-content:center;"><span>01767116</span></div>
<div class="t p" style="left:304.00px;top:127.80px;width:33.80px;height:9.05px;justify-content:center;"><span>36,000</span></div>
<div class="t c" style="left:337.80px;top:127.80px;width:37.90px;height:9.05px;justify-content:center;"><span>01767117</span></div>
<div class="t car" style="left:379.70px;top:127.80px;width:217.30px;height:9.05px;justify-content:flex-start;"><span>CITROEN</span></div>
<div class="t " style="left:10.30px;top:136.85px;width:17.00px;height:9.05px;justify-content:center;"><span>6.5</span></div>
<div class="t " style="left:27.30px;top:136.85px;width:25.60px;height:9.05px;justify-content:center;"><span>40</span></div>
<div class="t " style="left:52.90px;top:136.85px;width:22.40px;height:9.05px;justify-content:center;"><span>108</span></div>
<div class="t " style="left:75.30px;top:136.85px;width:23.50px;height:9.05px;justify-content:center;"><span>5</span></div>
<div class="t " style="left:98.80px;top:136.85px;width:28.20px;height:9.05px;justify-content:center;"><span>85-15T</span></div>
<div class="t " style="left:127.00px;top:136.85px;width:22.60px;height:9.05px;justify-content:center;"><span>63.4</span></div>
<div class="t cap" style="left:149.60px;top:136.85px;width:31.20px;height:9.05px;justify-content:center;"><span>D&amp;<i>純正</i></span></div>
<div class="t seat" style="left:180.80px;top:136.85px;width:52.20px;height:9.05px;justify-content:center;"><span>60 <b>度テーパー座</b></span></div>
<div class="t p" style="left:233.00px;top:136.85px;width:32.80px;height:9.05px;justify-content:center;"><span>36,000</span></div>
<div class="t c" style="left:265.80px;top:136.85px;width:38.20px;height:9.05px;justify-content:center;"><span>01767122</span></div>
<div class="t p" style="left:304.00px;top:136.85px;width:33.80px;height:9.05px;justify-content:center;"><span>36,000</span></div>
<div class="t c" style="left:337.80px;top:136.85px;width:37.90px;height:9.05px;justify-content:center;"><span>01767123</span></div>
<div class="t car" style="left:379.70px;top:136.85px;width:217.30px;height:9.05px;justify-content:flex-start;"><span>VOLVO <em>(純正キャップ品番：31445779 SL / 31400897 BLK)</em></span></div>
<div class="t " style="left:10.30px;top:145.90px;width:17.00px;height:9.05px;justify-content:center;"><span>6.5</span></div>
<div class="t " style="left:27.30px;top:145.90px;width:25.60px;height:9.05px;justify-content:center;"><span>50</span></div>
<div class="t " style="left:52.90px;top:145.90px;width:22.40px;height:9.05px;justify-content:center;"><span>108</span></div>
<div class="t " style="left:75.30px;top:145.90px;width:23.50px;height:9.05px;justify-content:center;"><span>5</span></div>
<div class="t " style="left:98.80px;top:145.90px;width:28.20px;height:9.05px;justify-content:center;"><span>85-16T</span></div>
<div class="t " style="left:127.00px;top:145.90px;width:22.60px;height:9.05px;justify-content:center;"><span>63.4</span></div>
<div class="t " style="left:149.60px;top:145.90px;width:31.20px;height:9.05px;justify-content:center;"><span>E</span></div>
<div class="t seat" style="left:180.80px;top:145.90px;width:52.20px;height:9.05px;justify-content:center;"><span>60 <b>度テーパー座</b></span></div>
<div class="t p" style="left:233.00px;top:145.90px;width:32.80px;height:9.05px;justify-content:center;"><span>36,000</span></div>
<div class="t c" style="left:265.80px;top:145.90px;width:38.20px;height:9.05px;justify-content:center;"><span>01743613</span></div>
<div class="t p" style="left:304.00px;top:145.90px;width:33.80px;height:9.05px;justify-content:center;"><span>36,000</span></div>
<div class="t c" style="left:337.80px;top:145.90px;width:37.90px;height:9.05px;justify-content:center;"><span>01743614</span></div>
<div class="t car" style="left:379.70px;top:145.90px;width:217.30px;height:9.05px;justify-content:flex-start;"><span>VOLVO</span></div>
<div class="t " style="left:10.30px;top:154.95px;width:17.00px;height:9.05px;justify-content:center;"><span>6.5</span></div>
<div class="t " style="left:27.30px;top:154.95px;width:25.60px;height:9.05px;justify-content:center;"><span>30</span></div>
<div class="t " style="left:52.90px;top:154.95px;width:22.40px;height:9.05px;justify-content:center;"><span>112</span></div>
<div class="t " style="left:75.30px;top:154.95px;width:23.50px;height:9.05px;justify-content:center;"><span>5</span></div>
<div class="t " style="left:98.80px;top:154.95px;width:28.20px;height:9.05px;justify-content:center;"><span>85-17T</span></div>
<div class="t " style="left:127.00px;top:154.95px;width:22.60px;height:9.05px;justify-content:center;"><span>57.1</span></div>
<div class="t " style="left:149.60px;top:154.95px;width:31.20px;height:9.05px;justify-content:center;"><span>J</span></div>
<div class="t seat" style="left:180.80px;top:154.95px;width:52.20px;height:9.05px;justify-content:center;"><span><b>球面座</b></span></div>
<div class="t p" style="left:233.00px;top:154.95px;width:32.80px;height:9.05px;justify-content:center;"><span>36,000</span></div>
<div class="t c" style="left:265.80px;top:154.95px;width:38.20px;height:9.05px;justify-content:center;"><span>01743607</span></div>
<div class="t p" style="left:304.00px;top:154.95px;width:33.80px;height:9.05px;justify-content:center;"><span>36,000</span></div>
<div class="t c" style="left:337.80px;top:154.95px;width:37.90px;height:9.05px;justify-content:center;"><span>01743608</span></div>
<div class="t car" style="left:379.70px;top:154.95px;width:217.30px;height:9.05px;justify-content:flex-start;"><span>AUDI/VW <em>(純正キャップ品番：4B0601170A / 3B7601171 対応)</em></span></div>
<div class="t " style="left:10.30px;top:164.00px;width:17.00px;height:9.05px;justify-content:center;"><span>6.5</span></div>
<div class="t " style="left:27.30px;top:164.00px;width:25.60px;height:9.05px;justify-content:center;"><span>50</span></div>
<div class="t " style="left:52.90px;top:164.00px;width:22.40px;height:9.05px;justify-content:center;"><span>112</span></div>
<div class="t " style="left:75.30px;top:164.00px;width:23.50px;height:9.05px;justify-content:center;"><span>5</span></div>
<div class="t " style="left:98.80px;top:164.00px;width:28.20px;height:9.05px;justify-content:center;"><span>85-18T</span></div>
<div class="t " style="left:127.00px;top:164.00px;width:22.60px;height:9.05px;justify-content:center;"><span>57.1</span></div>
<div class="t " style="left:149.60px;top:164.00px;width:31.20px;height:9.05px;justify-content:center;"><span>J</span></div>
<div class="t seat" style="left:180.80px;top:164.00px;width:52.20px;height:9.05px;justify-content:center;"><span><b>球面座</b></span></div>
<div class="t p" style="left:233.00px;top:164.00px;width:32.80px;height:9.05px;justify-content:center;"><span>36,000</span></div>
<div class="t c" style="left:265.80px;top:164.00px;width:38.20px;height:9.05px;justify-content:center;"><span>01743615</span></div>
<div class="t p" style="left:304.00px;top:164.00px;width:33.80px;height:9.05px;justify-content:center;"><span>36,000</span></div>
<div class="t c" style="left:337.80px;top:164.00px;width:37.90px;height:9.05px;justify-content:center;"><span>01743616</span></div>
<div class="t car" style="left:379.70px;top:164.00px;width:217.30px;height:9.05px;justify-content:flex-start;"><span>AUDI/VW <em>(純正キャップ品番：4B0601170A / 3B7601171 対応)</em></span></div>
<div class="t " style="left:10.30px;top:173.05px;width:17.00px;height:9.05px;justify-content:center;"><span>6.5</span></div>
<div class="t " style="left:27.30px;top:173.05px;width:25.60px;height:9.05px;justify-content:center;"><span>49</span></div>
<div class="t " style="left:52.90px;top:173.05px;width:22.40px;height:9.05px;justify-content:center;"><span>112</span></div>
<div class="t " style="left:75.30px;top:173.05px;width:23.50px;height:9.05px;justify-content:center;"><span>5</span></div>
<div class="t " style="left:98.80px;top:173.05px;width:28.20px;height:9.05px;justify-content:center;"><span>85-52T</span></div>
<div class="t " style="left:127.00px;top:173.05px;width:22.60px;height:9.05px;justify-content:center;"><span>66.6</span></div>
<div class="t cap" style="left:149.60px;top:173.05px;width:31.20px;height:9.05px;justify-content:center;"><span>J&amp;<i>純正</i></span></div>
<div class="t seat" style="left:180.80px;top:173.05px;width:52.20px;height:9.05px;justify-content:center;"><span>60 <b>度テーパー座</b></span></div>
<div class="t p" style="left:233.00px;top:173.05px;width:32.80px;height:9.05px;justify-content:center;"><span>36,000</span></div>
<div class="t c" style="left:265.80px;top:173.05px;width:38.20px;height:9.05px;justify-content:center;"><span>01743611</span></div>
<div class="t p" style="left:304.00px;top:173.05px;width:33.80px;height:9.05px;justify-content:center;"><span>36,000</span></div>
<div class="t c" style="left:337.80px;top:173.05px;width:37.90px;height:9.05px;justify-content:center;"><span>01743612</span></div>
<div class="t car" style="left:379.70px;top:173.05px;width:217.30px;height:9.05px;justify-content:flex-start;"><span>BMW/MINI</span></div>
<div class="t " style="left:10.30px;top:183.10px;width:17.00px;height:9.05px;justify-content:center;"><span>7.0</span></div>
<div class="t " style="left:27.30px;top:183.10px;width:25.60px;height:9.05px;justify-content:center;"><span>38</span></div>
<div class="t " style="left:52.90px;top:183.10px;width:22.40px;height:9.05px;justify-content:center;"><span>98</span></div>
<div class="t " style="left:75.30px;top:183.10px;width:23.50px;height:9.05px;justify-content:center;"><span>4</span></div>
<div class="t " style="left:98.80px;top:183.10px;width:28.20px;height:9.05px;justify-content:center;"><span>85-26T</span></div>
<div class="t " style="left:127.00px;top:183.10px;width:22.60px;height:9.05px;justify-content:center;"><span>58.1</span></div>
<div class="t " style="left:149.60px;top:183.10px;width:31.20px;height:9.05px;justify-content:center;"><span>E</span></div>
<div class="t seat" style="left:180.80px;top:183.10px;width:52.20px;height:9.05px;justify-content:center;"><span>60 <b>度テーパー座</b></span></div>
<div class="t p" style="left:233.00px;top:183.10px;width:32.80px;height:9.05px;justify-content:center;"><span>41,500</span></div>
<div class="t c" style="left:265.80px;top:183.10px;width:38.20px;height:9.05px;justify-content:center;"><span>01706507</span></div>
<div class="t p" style="left:304.00px;top:183.10px;width:33.80px;height:9.05px;justify-content:center;"><span>41,500</span></div>
<div class="t c" style="left:337.80px;top:183.10px;width:37.90px;height:9.05px;justify-content:center;"><span>01706508</span></div>
<div class="t car" style="left:379.70px;top:183.10px;width:217.30px;height:9.05px;justify-content:flex-start;"><span>ALFAROMEO/FIAT500(ABARTH)</span></div>
<div class="t " style="left:10.30px;top:192.15px;width:17.00px;height:9.05px;justify-content:center;"><span>7.0</span></div>
<div class="t " style="left:27.30px;top:192.15px;width:25.60px;height:9.05px;justify-content:center;"><span>40</span></div>
<div class="t " style="left:52.90px;top:192.15px;width:22.40px;height:9.05px;justify-content:center;"><span>100</span></div>
<div class="t " style="left:75.30px;top:192.15px;width:23.50px;height:9.05px;justify-content:center;"><span>5</span></div>
<div class="t " style="left:98.80px;top:192.15px;width:28.20px;height:9.05px;justify-content:center;"><span>85-27T</span></div>
<div class="t " style="left:127.00px;top:192.15px;width:22.60px;height:9.05px;justify-content:center;"><span>57.1</span></div>
<div class="t " style="left:149.60px;top:192.15px;width:31.20px;height:9.05px;justify-content:center;"><span>E</span></div>
<div class="t seat" style="left:180.80px;top:192.15px;width:52.20px;height:9.05px;justify-content:center;"><span><b>球面座</b></span></div>
<div class="t p" style="left:233.00px;top:192.15px;width:32.80px;height:9.05px;justify-content:center;"><span>41,500</span></div>
<div class="t c" style="left:265.80px;top:192.15px;width:38.20px;height:9.05px;justify-content:center;"><span>01706509</span></div>
<div class="t p" style="left:304.00px;top:192.15px;width:33.80px;height:9.05px;justify-content:center;"><span>41,500</span></div>
<div class="t c" style="left:337.80px;top:192.15px;width:37.90px;height:9.05px;justify-content:center;"><span>01743621</span></div>
<div class="t car" style="left:379.70px;top:192.15px;width:217.30px;height:9.05px;justify-content:flex-start;"><span>AUDI/VW</span></div>
<div class="t " style="left:10.30px;top:201.20px;width:17.00px;height:9.05px;justify-content:center;"><span>7.0</span></div>
<div class="t " style="left:27.30px;top:201.20px;width:25.60px;height:9.05px;justify-content:center;"><span>28</span></div>
<div class="t " style="left:52.90px;top:201.20px;width:22.40px;height:9.05px;justify-content:center;"><span>108</span></div>
<div class="t " style="left:75.30px;top:201.20px;width:23.50px;height:9.05px;justify-content:center;"><span>4</span></div>
<div class="t " style="left:98.80px;top:201.20px;width:28.20px;height:9.05px;justify-content:center;"><span>85-28T</span></div>
<div class="t " style="left:127.00px;top:201.20px;width:22.60px;height:9.05px;justify-content:center;"><span>65.1</span></div>
<div class="t " style="left:149.60px;top:201.20px;width:31.20px;height:9.05px;justify-content:center;"><span>E</span></div>
<div class="t seat" style="left:180.80px;top:201.20px;width:52.20px;height:9.05px;justify-content:center;"><span><b>平面座</b></span></div>
<div class="t p" style="left:233.00px;top:201.20px;width:32.80px;height:9.05px;justify-content:center;"><span>41,500</span></div>
<div class="t c" style="left:265.80px;top:201.20px;width:38.20px;height:9.05px;justify-content:center;"><span>01706505</span></div>
<div class="t p" style="left:304.00px;top:201.20px;width:33.80px;height:9.05px;justify-content:center;"><span>41,500</span></div>
<div class="t c" style="left:337.80px;top:201.20px;width:37.90px;height:9.05px;justify-content:center;"><span>01706506</span></div>
<div class="t car" style="left:379.70px;top:201.20px;width:217.30px;height:9.05px;justify-content:flex-start;"><span>CITROEN/PEUGEOT</span></div>
<div class="t " style="left:10.30px;top:210.25px;width:17.00px;height:9.05px;justify-content:center;"><span>7.0</span></div>
<div class="t " style="left:27.30px;top:210.25px;width:25.60px;height:9.05px;justify-content:center;"><span>40</span></div>
<div class="t " style="left:52.90px;top:210.25px;width:22.40px;height:9.05px;justify-content:center;"><span>108</span></div>
<div class="t " style="left:75.30px;top:210.25px;width:23.50px;height:9.05px;justify-content:center;"><span>5</span></div>
<div class="t " style="left:98.80px;top:210.25px;width:28.20px;height:9.05px;justify-content:center;"><span>85-29T</span></div>
<div class="t " style="left:127.00px;top:210.25px;width:22.60px;height:9.05px;justify-content:center;"><span>65.1</span></div>
<div class="t " style="left:149.60px;top:210.25px;width:31.20px;height:9.05px;justify-content:center;"><span>E</span></div>
<div class="t seat" style="left:180.80px;top:210.25px;width:52.20px;height:9.05px;justify-content:center;"><span>60 <b>度テーパー座</b></span></div>
<div class="t p" style="left:233.00px;top:210.25px;width:32.80px;height:9.05px;justify-content:center;"><span>41,500</span></div>
<div class="t c" style="left:265.80px;top:210.25px;width:38.20px;height:9.05px;justify-content:center;"><span>01706510</span></div>
<div class="t p" style="left:304.00px;top:210.25px;width:33.80px;height:9.05px;justify-content:center;"><span>41,500</span></div>
<div class="t c" style="left:337.80px;top:210.25px;width:37.90px;height:9.05px;justify-content:center;"><span>01743622</span></div>
<div class="t car" style="left:379.70px;top:210.25px;width:217.30px;height:9.05px;justify-content:flex-start;"><span>VOLVO</span></div>
<div class="t " style="left:10.30px;top:218.30px;width:17.00px;height:9.05px;justify-content:center;"><span>7.0</span></div>
<div class="t " style="left:27.30px;top:218.30px;width:25.60px;height:9.05px;justify-content:center;"><span>50</span></div>
<div class="t " style="left:52.90px;top:218.30px;width:22.40px;height:9.05px;justify-content:center;"><span>108</span></div>
<div class="t " style="left:75.30px;top:218.30px;width:23.50px;height:9.05px;justify-content:center;"><span>5</span></div>
<div class="t " style="left:98.80px;top:218.30px;width:28.20px;height:9.05px;justify-content:center;"><span>85-30T</span></div>
<div class="t " style="left:127.00px;top:218.30px;width:22.60px;height:9.05px;justify-content:center;"><span>63.4</span></div>
<div class="t " style="left:149.60px;top:218.30px;width:31.20px;height:9.05px;justify-content:center;"><span>E</span></div>
<div class="t seat" style="left:180.80px;top:218.30px;width:52.20px;height:9.05px;justify-content:center;"><span>60 <b>度テーパー座</b></span></div>
<div class="t p" style="left:233.00px;top:218.30px;width:32.80px;height:9.05px;justify-content:center;"><span>41,500</span></div>
<div class="t c" style="left:265.80px;top:218.30px;width:38.20px;height:9.05px;justify-content:center;"><span>01706515</span></div>
<div class="t p" style="left:304.00px;top:218.30px;width:33.80px;height:9.05px;justify-content:center;"><span>41,500</span></div>
<div class="t c" style="left:337.80px;top:218.30px;width:37.90px;height:9.05px;justify-content:center;"><span>01706516</span></div>
<div class="t car" style="left:379.70px;top:218.30px;width:217.30px;height:9.05px;justify-content:flex-start;"><span>*JAGUAR/VOLVO</span></div>
<div class="t " style="left:10.30px;top:227.35px;width:17.00px;height:9.05px;justify-content:center;"><span>7.0</span></div>
<div class="t " style="left:27.30px;top:227.35px;width:25.60px;height:9.05px;justify-content:center;"><span>53</span></div>
<div class="t " style="left:52.90px;top:227.35px;width:22.40px;height:9.05px;justify-content:center;"><span>112</span></div>
<div class="t " style="left:75.30px;top:227.35px;width:23.50px;height:9.05px;justify-content:center;"><span>5</span></div>
<div class="t " style="left:98.80px;top:227.35px;width:28.20px;height:9.05px;justify-content:center;"><span>85-31T</span></div>
<div class="t " style="left:127.00px;top:227.35px;width:22.60px;height:9.05px;justify-content:center;"><span>57.1</span></div>
<div class="t cap" style="left:149.60px;top:227.35px;width:31.20px;height:9.05px;justify-content:center;"><span>J&amp;<i>純正</i></span></div>
<div class="t seat" style="left:180.80px;top:227.35px;width:52.20px;height:9.05px;justify-content:center;"><span><b>球面座</b></span></div>
<div class="t p" style="left:233.00px;top:227.35px;width:32.80px;height:9.05px;justify-content:center;"><span>41,500</span></div>
<div class="t c" style="left:265.80px;top:227.35px;width:38.20px;height:9.05px;justify-content:center;"><span>01706519</span></div>
<div class="t p" style="left:304.00px;top:227.35px;width:33.80px;height:9.05px;justify-content:center;"><span>41,500</span></div>
<div class="t c" style="left:337.80px;top:227.35px;width:37.90px;height:9.05px;justify-content:center;"><span>01706520</span></div>
<div class="t car" style="left:379.70px;top:227.35px;width:217.30px;height:9.05px;justify-content:flex-start;"><span>AUDI/VW <em>(純正キャップ品番：3B7601171 対応)</em></span></div>
<div class="t " style="left:10.30px;top:236.40px;width:17.00px;height:9.05px;justify-content:center;"><span>7.0</span></div>
<div class="t " style="left:27.30px;top:236.40px;width:25.60px;height:9.05px;justify-content:center;"><span>48</span></div>
<div class="t " style="left:52.90px;top:236.40px;width:22.40px;height:9.05px;justify-content:center;"><span>112</span></div>
<div class="t " style="left:75.30px;top:236.40px;width:23.50px;height:9.05px;justify-content:center;"><span>5</span></div>
<div class="t " style="left:98.80px;top:236.40px;width:28.20px;height:9.05px;justify-content:center;"><span>85-32T</span></div>
<div class="t " style="left:127.00px;top:236.40px;width:22.60px;height:9.05px;justify-content:center;"><span>66.5</span></div>
<div class="t cap" style="left:149.60px;top:236.40px;width:31.20px;height:9.05px;justify-content:center;"><span>G&amp;<i>純正</i></span></div>
<div class="t seat" style="left:180.80px;top:236.40px;width:52.20px;height:9.05px;justify-content:center;"><span><b>球面座</b></span></div>
<div class="t p" style="left:233.00px;top:236.40px;width:32.80px;height:9.05px;justify-content:center;"><span>41,500</span></div>
<div class="t c" style="left:265.80px;top:236.40px;width:38.20px;height:9.05px;justify-content:center;"><span>01706513</span></div>
<div class="t p" style="left:304.00px;top:236.40px;width:33.80px;height:9.05px;justify-content:center;"><span>41,500</span></div>
<div class="t c" style="left:337.80px;top:236.40px;width:37.90px;height:9.05px;justify-content:center;"><span>01706514</span></div>
<div class="t car" style="left:379.70px;top:236.40px;width:217.30px;height:9.05px;justify-content:flex-start;"><span>BENZ</span></div>
<div class="t " style="left:10.30px;top:245.45px;width:17.00px;height:9.05px;justify-content:center;"><span>7.0</span></div>
<div class="t " style="left:27.30px;top:245.45px;width:25.60px;height:9.05px;justify-content:center;"><span>45</span></div>
<div class="t " style="left:52.90px;top:245.45px;width:22.40px;height:9.05px;justify-content:center;"><span>120</span></div>
<div class="t " style="left:75.30px;top:245.45px;width:23.50px;height:9.05px;justify-content:center;"><span>5</span></div>
<div class="t " style="left:98.80px;top:245.45px;width:28.20px;height:9.05px;justify-content:center;"><span>85-33T</span></div>
<div class="t " style="left:127.00px;top:245.45px;width:22.60px;height:9.05px;justify-content:center;"><span>72.6</span></div>
<div class="t cap" style="left:149.60px;top:245.45px;width:31.20px;height:9.05px;justify-content:center;"><span>I&amp;<i>純正</i></span></div>
<div class="t seat" style="left:180.80px;top:245.45px;width:52.20px;height:9.05px;justify-content:center;"><span>60 <b>度テーパー座</b></span></div>
<div class="t p" style="left:233.00px;top:245.45px;width:32.80px;height:9.05px;justify-content:center;"><span>41,500</span></div>
<div class="t c" style="left:265.80px;top:245.45px;width:38.20px;height:9.05px;justify-content:center;"><span>01706511</span></div>
<div class="t p" style="left:304.00px;top:245.45px;width:33.80px;height:9.05px;justify-content:center;"><span>41,500</span></div>
<div class="t c" style="left:337.80px;top:245.45px;width:37.90px;height:9.05px;justify-content:center;"><span>01706512</span></div>
<div class="t car" style="left:379.70px;top:245.45px;width:217.30px;height:9.05px;justify-content:flex-start;"><span>BMW <em>(純正キャップ品番：36136783536 対応)/MINI CROSSOVER(R60/R61)</em></span></div>
<div class="t " style="left:10.30px;top:254.50px;width:17.00px;height:9.05px;justify-content:center;"><span>7.0</span></div>
<div class="t " style="left:27.30px;top:254.50px;width:25.60px;height:9.05px;justify-content:center;"><span>52</span></div>
<div class="t " style="left:52.90px;top:254.50px;width:22.40px;height:9.05px;justify-content:center;"><span>112</span></div>
<div class="t " style="left:75.30px;top:254.50px;width:23.50px;height:9.05px;justify-content:center;"><span>5</span></div>
<div class="t " style="left:98.80px;top:254.50px;width:28.20px;height:9.05px;justify-content:center;"><span>85-53T</span></div>
<div class="t " style="left:127.00px;top:254.50px;width:22.60px;height:9.05px;justify-content:center;"><span>66.6</span></div>
<div class="t cap" style="left:149.60px;top:254.50px;width:31.20px;height:9.05px;justify-content:center;"><span>L&amp;<i>純正</i></span></div>
<div class="t seat" style="left:180.80px;top:254.50px;width:52.20px;height:9.05px;justify-content:center;"><span>60 <b>度テーパー座</b></span></div>
<div class="t p" style="left:233.00px;top:254.50px;width:32.80px;height:9.05px;justify-content:center;"><span>41,500</span></div>
<div class="t c" style="left:265.80px;top:254.50px;width:38.20px;height:9.05px;justify-content:center;"><span>01706517</span></div>
<div class="t p" style="left:304.00px;top:254.50px;width:33.80px;height:9.05px;justify-content:center;"><span>41,500</span></div>
<div class="t c" style="left:337.80px;top:254.50px;width:37.90px;height:9.05px;justify-content:center;"><span>01706518</span></div>
<div class="t car" style="left:379.70px;top:254.50px;width:217.30px;height:9.05px;justify-content:flex-start;"><span>BMW <em>(純正キャップ品番：01-6850834/01-6857149/01-6861092)</em></span></div>
<div class="t " style="left:10.30px;top:263.55px;width:17.00px;height:9.05px;justify-content:center;"><span>7.0</span></div>
<div class="t " style="left:27.30px;top:263.55px;width:25.60px;height:9.05px;justify-content:center;"><span>35</span></div>
<div class="t " style="left:52.90px;top:263.55px;width:22.40px;height:9.05px;justify-content:center;"><span>98</span></div>
<div class="t " style="left:75.30px;top:263.55px;width:23.50px;height:9.05px;justify-content:center;"><span>4</span></div>
<div class="t " style="left:98.80px;top:263.55px;width:28.20px;height:9.05px;justify-content:center;"><span>85-54T</span></div>
<div class="t " style="left:127.00px;top:263.55px;width:22.60px;height:9.05px;justify-content:center;"><span>58.1</span></div>
<div class="t " style="left:149.60px;top:263.55px;width:31.20px;height:9.05px;justify-content:center;"><span>E</span></div>
<div class="t seat" style="left:180.80px;top:263.55px;width:52.20px;height:9.05px;justify-content:center;"><span>60 <b>度テーパー座</b></span></div>
<div class="t p" style="left:233.00px;top:263.55px;width:32.80px;height:9.05px;justify-content:center;"><span>41,500</span></div>
<div class="t c" style="left:265.80px;top:263.55px;width:38.20px;height:9.05px;justify-content:center;"><span>01743617</span></div>
<div class="t p" style="left:304.00px;top:263.55px;width:33.80px;height:9.05px;justify-content:center;"><span>41,500</span></div>
<div class="t c" style="left:337.80px;top:263.55px;width:37.90px;height:9.05px;justify-content:center;"><span>01743618</span></div>
<div class="t car" style="left:379.70px;top:263.55px;width:217.30px;height:9.05px;justify-content:flex-start;"><span>FIAT（ABARTH）</span></div>
<div class="t " style="left:10.30px;top:272.60px;width:17.00px;height:9.05px;justify-content:center;"><span>7.0</span></div>
<div class="t " style="left:27.30px;top:272.60px;width:25.60px;height:9.05px;justify-content:center;"><span>35</span></div>
<div class="t " style="left:52.90px;top:272.60px;width:22.40px;height:9.05px;justify-content:center;"><span>112</span></div>
<div class="t " style="left:75.30px;top:272.60px;width:23.50px;height:9.05px;justify-content:center;"><span>5</span></div>
<div class="t " style="left:98.80px;top:272.60px;width:28.20px;height:9.05px;justify-content:center;"><span>85-55T</span></div>
<div class="t " style="left:127.00px;top:272.60px;width:22.60px;height:9.05px;justify-content:center;"><span>66.6</span></div>
<div class="t " style="left:149.60px;top:272.60px;width:31.20px;height:9.05px;justify-content:center;"><span>J</span></div>
<div class="t seat" style="left:180.80px;top:272.60px;width:52.20px;height:9.05px;justify-content:center;"><span><b>球面座</b></span></div>
<div class="t p" style="left:233.00px;top:272.60px;width:32.80px;height:9.05px;justify-content:center;"><span>41,500</span></div>
<div class="t c" style="left:265.80px;top:272.60px;width:38.20px;height:9.05px;justify-content:center;"><span>01743619</span></div>
<div class="t p" style="left:304.00px;top:272.60px;width:33.80px;height:9.05px;justify-content:center;"><span>41,500</span></div>
<div class="t c" style="left:337.80px;top:272.60px;width:37.90px;height:9.05px;justify-content:center;"><span>01743620</span></div>
<div class="t car" style="left:379.70px;top:272.60px;width:217.30px;height:9.05px;justify-content:flex-start;"><span>AUDI <em>(純正キャップ品番：8W0601170)</em></span></div>
<div class="t " style="left:10.30px;top:281.65px;width:17.00px;height:9.05px;justify-content:center;"><span>7.0</span></div>
<div class="t " style="left:27.30px;top:281.65px;width:25.60px;height:9.05px;justify-content:center;"><span>45</span></div>
<div class="t " style="left:52.90px;top:281.65px;width:22.40px;height:9.05px;justify-content:center;"><span>112</span></div>
<div class="t " style="left:75.30px;top:281.65px;width:23.50px;height:9.05px;justify-content:center;"><span>5</span></div>
<div class="t " style="left:98.80px;top:281.65px;width:28.20px;height:9.05px;justify-content:center;"><span>85-56T</span></div>
<div class="t " style="left:127.00px;top:281.65px;width:22.60px;height:9.05px;justify-content:center;"><span>57.1</span></div>
<div class="t " style="left:149.60px;top:281.65px;width:31.20px;height:9.05px;justify-content:center;"><span>J</span></div>
<div class="t seat" style="left:180.80px;top:281.65px;width:52.20px;height:9.05px;justify-content:center;"><span><b>球面座</b></span></div>
<div class="t p" style="left:233.00px;top:281.65px;width:32.80px;height:9.05px;justify-content:center;"><span>41,500</span></div>
<div class="t c" style="left:265.80px;top:281.65px;width:38.20px;height:9.05px;justify-content:center;"><span>01743623</span></div>
<div class="t p" style="left:304.00px;top:281.65px;width:33.80px;height:9.05px;justify-content:center;"><span>41,500</span></div>
<div class="t c" style="left:337.80px;top:281.65px;width:37.90px;height:9.05px;justify-content:center;"><span>01743624</span></div>
<div class="t car" style="left:379.70px;top:281.65px;width:217.30px;height:9.05px;justify-content:flex-start;"><span>AUDI <em>(純正キャップ品番：8W0601170)</em></span></div>
<div class="t " style="left:10.30px;top:290.70px;width:17.00px;height:9.05px;justify-content:center;"><span>7.0</span></div>
<div class="t " style="left:27.30px;top:290.70px;width:25.60px;height:9.05px;justify-content:center;"><span>44</span></div>
<div class="t " style="left:52.90px;top:290.70px;width:22.40px;height:9.05px;justify-content:center;"><span>108</span></div>
<div class="t " style="left:75.30px;top:290.70px;width:23.50px;height:9.05px;justify-content:center;"><span>5</span></div>
<div class="t " style="left:98.80px;top:290.70px;width:28.20px;height:9.05px;justify-content:center;"><span>85-60T</span></div>
<div class="t " style="left:127.00px;top:290.70px;width:22.60px;height:9.05px;justify-content:center;"><span>65.1</span></div>
<div class="t " style="left:149.60px;top:290.70px;width:31.20px;height:9.05px;justify-content:center;"><span>E</span></div>
<div class="t seat" style="left:180.80px;top:290.70px;width:52.20px;height:9.05px;justify-content:center;"><span><b>平面座</b></span></div>
<div class="t p" style="left:233.00px;top:290.70px;width:32.80px;height:9.05px;justify-content:center;"><span>41,500</span></div>
<div class="t c" style="left:265.80px;top:290.70px;width:38.20px;height:9.05px;justify-content:center;"><span>01768793</span></div>
<div class="t p" style="left:304.00px;top:290.70px;width:33.80px;height:9.05px;justify-content:center;"><span>41,500</span></div>
<div class="t c" style="left:337.80px;top:290.70px;width:37.90px;height:9.05px;justify-content:center;"><span>01768794</span></div>
<div class="t car" style="left:379.70px;top:290.70px;width:217.30px;height:9.05px;justify-content:flex-start;"><span>CITROEN/PEUGEOT</span></div>
<div class="t " style="left:10.30px;top:300.75px;width:17.00px;height:9.05px;justify-content:center;"><span>7.5</span></div>
<div class="t " style="left:27.30px;top:300.75px;width:25.60px;height:9.05px;justify-content:center;"><span>30</span></div>
<div class="t " style="left:52.90px;top:300.75px;width:22.40px;height:9.05px;justify-content:center;"><span>112</span></div>
<div class="t " style="left:75.30px;top:300.75px;width:23.50px;height:9.05px;justify-content:center;"><span>5</span></div>
<div class="t " style="left:98.80px;top:300.75px;width:28.20px;height:9.05px;justify-content:center;"><span>85-61T</span></div>
<div class="t p dv" style="left:233.00px;top:300.75px;width:32.80px;height:9.05px;justify-content:center;"><span>開発中</span></div>
<div class="t p dv" style="left:304.00px;top:300.75px;width:33.80px;height:9.05px;justify-content:center;"><span>開発中</span></div>
<div class="t car" style="left:379.70px;top:300.75px;width:217.30px;height:9.05px;justify-content:flex-start;"><span>BMW</span></div>
<div class="t " style="left:10.30px;top:309.80px;width:17.00px;height:9.05px;justify-content:center;"><span>7.5</span></div>
<div class="t " style="left:27.30px;top:309.80px;width:25.60px;height:9.05px;justify-content:center;"><span>50</span></div>
<div class="t " style="left:52.90px;top:309.80px;width:22.40px;height:9.05px;justify-content:center;"><span>108</span></div>
<div class="t " style="left:75.30px;top:309.80px;width:23.50px;height:9.05px;justify-content:center;"><span>5</span></div>
<div class="t " style="left:98.80px;top:309.80px;width:28.20px;height:9.05px;justify-content:center;"><span>85-62T</span></div>
<div class="t p dv" style="left:233.00px;top:309.80px;width:32.80px;height:9.05px;justify-content:center;"><span>開発中</span></div>
<div class="t p dv" style="left:304.00px;top:309.80px;width:33.80px;height:9.05px;justify-content:center;"><span>開発中</span></div>
<div class="t car" style="left:379.70px;top:309.80px;width:217.30px;height:9.05px;justify-content:flex-start;"><span>VOLVO</span></div>
<div class="t " style="left:10.30px;top:318.85px;width:17.00px;height:9.05px;justify-content:center;"><span>7.5</span></div>
<div class="t " style="left:27.30px;top:318.85px;width:25.60px;height:9.05px;justify-content:center;"><span>40</span></div>
<div class="t " style="left:52.90px;top:318.85px;width:22.40px;height:9.05px;justify-content:center;"><span>112</span></div>
<div class="t " style="left:75.30px;top:318.85px;width:23.50px;height:9.05px;justify-content:center;"><span>5</span></div>
<div class="t " style="left:98.80px;top:318.85px;width:28.20px;height:9.05px;justify-content:center;"><span>85-63T</span></div>
<div class="t p dv" style="left:233.00px;top:318.85px;width:32.80px;height:9.05px;justify-content:center;"><span>開発中</span></div>
<div class="t p dv" style="left:304.00px;top:318.85px;width:33.80px;height:9.05px;justify-content:center;"><span>開発中</span></div>
<div class="t car" style="left:379.70px;top:318.85px;width:217.30px;height:9.05px;justify-content:flex-start;"><span>BENZ</span></div>
<div class="t " style="left:10.30px;top:327.90px;width:17.00px;height:9.05px;justify-content:center;"><span>7.5</span></div>
<div class="t " style="left:27.30px;top:327.90px;width:25.60px;height:9.05px;justify-content:center;"><span>52</span></div>
<div class="t " style="left:52.90px;top:327.90px;width:22.40px;height:9.05px;justify-content:center;"><span>112</span></div>
<div class="t " style="left:75.30px;top:327.90px;width:23.50px;height:9.05px;justify-content:center;"><span>5</span></div>
<div class="t " style="left:98.80px;top:327.90px;width:28.20px;height:9.05px;justify-content:center;"><span>85-64T</span></div>
<div class="t p dv" style="left:233.00px;top:327.90px;width:32.80px;height:9.05px;justify-content:center;"><span>開発中</span></div>
<div class="t p dv" style="left:304.00px;top:327.90px;width:33.80px;height:9.05px;justify-content:center;"><span>開発中</span></div>
<div class="t car" style="left:379.70px;top:327.90px;width:217.30px;height:9.05px;justify-content:flex-start;"><span>BENZ</span></div>
<div class="t " style="left:10.30px;top:335.95px;width:17.00px;height:9.05px;justify-content:center;"><span>8.0</span></div>
<div class="t " style="left:27.30px;top:335.95px;width:25.60px;height:9.05px;justify-content:center;"><span>28</span></div>
<div class="t " style="left:52.90px;top:335.95px;width:22.40px;height:9.05px;justify-content:center;"><span>112</span></div>
<div class="t " style="left:75.30px;top:335.95px;width:23.50px;height:9.05px;justify-content:center;"><span>5</span></div>
<div class="t " style="left:98.80px;top:335.95px;width:28.20px;height:9.05px;justify-content:center;"><span>85-42T</span></div>
<div class="t " style="left:127.00px;top:335.95px;width:22.60px;height:9.05px;justify-content:center;"><span>66.6</span></div>
<div class="t cap" style="left:149.60px;top:335.95px;width:31.20px;height:9.05px;justify-content:center;"><span>K&amp;<i>純正</i></span></div>
<div class="t seat" style="left:180.80px;top:335.95px;width:52.20px;height:9.05px;justify-content:center;"><span>60 <b>度テーパー座</b></span></div>
<div class="t p" style="left:233.00px;top:335.95px;width:32.80px;height:9.05px;justify-content:center;"><span>50,000</span></div>
<div class="t c" style="left:265.80px;top:335.95px;width:38.20px;height:9.05px;justify-content:center;"><span>01706521</span></div>
<div class="t p" style="left:304.00px;top:335.95px;width:33.80px;height:9.05px;justify-content:center;"><span>50,000</span></div>
<div class="t c" style="left:337.80px;top:335.95px;width:37.90px;height:9.05px;justify-content:center;"><span>01743626</span></div>
<div class="t car" style="left:379.70px;top:335.95px;width:217.30px;height:9.05px;justify-content:flex-start;"><span>BMW <em>(純正キャップ品番：01-6850834/01-6857149/01-6861092)</em></span></div>
<div class="t " style="left:10.30px;top:345.00px;width:17.00px;height:9.05px;justify-content:center;"><span>8.0</span></div>
<div class="t " style="left:27.30px;top:345.00px;width:25.60px;height:9.05px;justify-content:center;"><span>40</span></div>
<div class="t " style="left:52.90px;top:345.00px;width:22.40px;height:9.05px;justify-content:center;"><span>112</span></div>
<div class="t " style="left:75.30px;top:345.00px;width:23.50px;height:9.05px;justify-content:center;"><span>5</span></div>
<div class="t " style="left:98.80px;top:345.00px;width:28.20px;height:9.05px;justify-content:center;"><span>85-43T</span></div>
<div class="t " style="left:127.00px;top:345.00px;width:22.60px;height:9.05px;justify-content:center;"><span>57.1</span></div>
<div class="t cap" style="left:149.60px;top:345.00px;width:31.20px;height:9.05px;justify-content:center;"><span>J&amp;<i>純正</i></span></div>
<div class="t seat" style="left:180.80px;top:345.00px;width:52.20px;height:9.05px;justify-content:center;"><span><b>球面座</b></span></div>
<div class="t p" style="left:233.00px;top:345.00px;width:32.80px;height:9.05px;justify-content:center;"><span>50,000</span></div>
<div class="t c" style="left:265.80px;top:345.00px;width:38.20px;height:9.05px;justify-content:center;"><span>01706522</span></div>
<div class="t p" style="left:304.00px;top:345.00px;width:33.80px;height:9.05px;justify-content:center;"><span>50,000</span></div>
<div class="t c" style="left:337.80px;top:345.00px;width:37.90px;height:9.05px;justify-content:center;"><span>01743628</span></div>
<div class="t car" style="left:379.70px;top:345.00px;width:217.30px;height:9.05px;justify-content:flex-start;"><span>AUDI/VW <em>(純正キャップ品番：4B0601170A/3B7601171)</em></span></div>
<div class="t " style="left:10.30px;top:355.05px;width:17.00px;height:9.05px;justify-content:center;"><span>8.0</span></div>
<div class="t " style="left:27.30px;top:355.05px;width:25.60px;height:9.05px;justify-content:center;"><span>48</span></div>
<div class="t " style="left:52.90px;top:355.05px;width:22.40px;height:9.05px;justify-content:center;"><span>112</span></div>
<div class="t " style="left:75.30px;top:355.05px;width:23.50px;height:9.05px;justify-content:center;"><span>5</span></div>
<div class="t " style="left:98.80px;top:355.05px;width:28.20px;height:9.05px;justify-content:center;"><span>85-46T</span></div>
<div class="t " style="left:127.00px;top:355.05px;width:22.60px;height:9.05px;justify-content:center;"><span>57.1</span></div>
<div class="t cap" style="left:149.60px;top:355.05px;width:31.20px;height:9.05px;justify-content:center;"><span>J&amp;<i>純正</i></span></div>
<div class="t seat" style="left:180.80px;top:355.05px;width:52.20px;height:9.05px;justify-content:center;"><span><b>球面座</b></span></div>
<div class="t p" style="left:233.00px;top:355.05px;width:32.80px;height:9.05px;justify-content:center;"><span>50,000</span></div>
<div class="t c" style="left:265.80px;top:355.05px;width:38.20px;height:9.05px;justify-content:center;"><span>01706523</span></div>
<div class="t p" style="left:304.00px;top:355.05px;width:33.80px;height:9.05px;justify-content:center;"><span>50,000</span></div>
<div class="t c" style="left:337.80px;top:355.05px;width:37.90px;height:9.05px;justify-content:center;"><span>01743633</span></div>
<div class="t car" style="left:379.70px;top:355.05px;width:217.30px;height:9.05px;justify-content:flex-start;"><span>AUDI/VW <em>(純正キャップ品番：4B0601170A/3B7601171)</em></span></div>
<div class="t " style="left:10.30px;top:364.10px;width:17.00px;height:9.05px;justify-content:center;"><span>8.0</span></div>
<div class="t " style="left:27.30px;top:364.10px;width:25.60px;height:9.05px;justify-content:center;"><span>48</span></div>
<div class="t " style="left:52.90px;top:364.10px;width:22.40px;height:9.05px;justify-content:center;"><span>112</span></div>
<div class="t " style="left:75.30px;top:364.10px;width:23.50px;height:9.05px;justify-content:center;"><span>5</span></div>
<div class="t " style="left:98.80px;top:364.10px;width:28.20px;height:9.05px;justify-content:center;"><span>85-47T</span></div>
<div class="t " style="left:127.00px;top:364.10px;width:22.60px;height:9.05px;justify-content:center;"><span>66.6</span></div>
<div class="t cap" style="left:149.60px;top:364.10px;width:31.20px;height:9.05px;justify-content:center;"><span>G&amp;<i>純正</i></span></div>
<div class="t seat" style="left:180.80px;top:364.10px;width:52.20px;height:9.05px;justify-content:center;"><span><b>球面座</b></span></div>
<div class="t p" style="left:233.00px;top:364.10px;width:32.80px;height:9.05px;justify-content:center;"><span>50,000</span></div>
<div class="t c" style="left:265.80px;top:364.10px;width:38.20px;height:9.05px;justify-content:center;"><span>01706524</span></div>
<div class="t p" style="left:304.00px;top:364.10px;width:33.80px;height:9.05px;justify-content:center;"><span>50,000</span></div>
<div class="t c" style="left:337.80px;top:364.10px;width:37.90px;height:9.05px;justify-content:center;"><span>01743634</span></div>
<div class="t car" style="left:379.70px;top:364.10px;width:217.30px;height:9.05px;justify-content:flex-start;"><span>BENZ</span></div>
<div class="t " style="left:10.30px;top:373.15px;width:17.00px;height:9.05px;justify-content:center;"><span>8.0</span></div>
<div class="t " style="left:27.30px;top:373.15px;width:25.60px;height:9.05px;justify-content:center;"><span>45</span></div>
<div class="t " style="left:52.90px;top:373.15px;width:22.40px;height:9.05px;justify-content:center;"><span>108</span></div>
<div class="t " style="left:75.30px;top:373.15px;width:23.50px;height:9.05px;justify-content:center;"><span>5</span></div>
<div class="t " style="left:98.80px;top:373.15px;width:28.20px;height:9.05px;justify-content:center;"><span>85-57T</span></div>
<div class="t " style="left:127.00px;top:373.15px;width:22.60px;height:9.05px;justify-content:center;"><span>65.1</span></div>
<div class="t cap" style="left:149.60px;top:373.15px;width:31.20px;height:9.05px;justify-content:center;"><span>M&amp;<i>純正</i></span></div>
<div class="t seat" style="left:180.80px;top:373.15px;width:52.20px;height:9.05px;justify-content:center;"><span>60 <b>度テーパー座</b></span></div>
<div class="t p" style="left:233.00px;top:373.15px;width:32.80px;height:9.05px;justify-content:center;"><span>50,000</span></div>
<div class="t c" style="left:265.80px;top:373.15px;width:38.20px;height:9.05px;justify-content:center;"><span>01743631</span></div>
<div class="t p" style="left:304.00px;top:373.15px;width:33.80px;height:9.05px;justify-content:center;"><span>50,000</span></div>
<div class="t c" style="left:337.80px;top:373.15px;width:37.90px;height:9.05px;justify-content:center;"><span>01743632</span></div>
<div class="t car" style="left:379.70px;top:373.15px;width:217.30px;height:9.05px;justify-content:flex-start;"><span>PEUGEOT/CITROEN</span></div>
<div class="t " style="left:10.30px;top:382.20px;width:17.00px;height:9.05px;justify-content:center;"><span>8.0</span></div>
<div class="t " style="left:27.30px;top:382.20px;width:25.60px;height:9.05px;justify-content:center;"><span>28</span></div>
<div class="t " style="left:52.90px;top:382.20px;width:22.40px;height:9.05px;justify-content:center;"><span>112</span></div>
<div class="t " style="left:75.30px;top:382.20px;width:23.50px;height:9.05px;justify-content:center;"><span>5</span></div>
<div class="t " style="left:98.80px;top:382.20px;width:28.20px;height:9.05px;justify-content:center;"><span>85-58T</span></div>
<div class="t " style="left:127.00px;top:382.20px;width:22.60px;height:9.05px;justify-content:center;"><span>66.6</span></div>
<div class="t cap" style="left:149.60px;top:382.20px;width:31.20px;height:9.05px;justify-content:center;"><span>J&amp;<i>純正</i></span></div>
<div class="t seat" style="left:180.80px;top:382.20px;width:52.20px;height:9.05px;justify-content:center;"><span><b>球面座</b></span></div>
<div class="t p" style="left:233.00px;top:382.20px;width:32.80px;height:9.05px;justify-content:center;"><span>50,000</span></div>
<div class="t c" style="left:265.80px;top:382.20px;width:38.20px;height:9.05px;justify-content:center;"><span>01743625</span></div>
<div class="t p" style="left:304.00px;top:382.20px;width:33.80px;height:9.05px;justify-content:center;"><span>50,000</span></div>
<div class="t c" style="left:337.80px;top:382.20px;width:37.90px;height:9.05px;justify-content:center;"><span>01743627</span></div>
<div class="t car" style="left:379.70px;top:382.20px;width:217.30px;height:9.05px;justify-content:flex-start;"><span>AUDI <em>(純正キャップ品番：8W0601170)</em></span></div>
<div class="t " style="left:10.30px;top:391.25px;width:17.00px;height:9.05px;justify-content:center;"><span>8.0</span></div>
<div class="t " style="left:27.30px;top:391.25px;width:25.60px;height:9.05px;justify-content:center;"><span>42</span></div>
<div class="t " style="left:52.90px;top:391.25px;width:22.40px;height:9.05px;justify-content:center;"><span>112</span></div>
<div class="t " style="left:75.30px;top:391.25px;width:23.50px;height:9.05px;justify-content:center;"><span>5</span></div>
<div class="t " style="left:98.80px;top:391.25px;width:28.20px;height:9.05px;justify-content:center;"><span>85-59T</span></div>
<div class="t " style="left:127.00px;top:391.25px;width:22.60px;height:9.05px;justify-content:center;"><span>66.6</span></div>
<div class="t cap" style="left:149.60px;top:391.25px;width:31.20px;height:9.05px;justify-content:center;"><span>J&amp;<i>純正</i></span></div>
<div class="t seat" style="left:180.80px;top:391.25px;width:52.20px;height:9.05px;justify-content:center;"><span><b>球面座</b></span></div>
<div class="t p" style="left:233.00px;top:391.25px;width:32.80px;height:9.05px;justify-content:center;"><span>50,000</span></div>
<div class="t c" style="left:265.80px;top:391.25px;width:38.20px;height:9.05px;justify-content:center;"><span>01743629</span></div>
<div class="t p" style="left:304.00px;top:391.25px;width:33.80px;height:9.05px;justify-content:center;"><span>50,000</span></div>
<div class="t c" style="left:337.80px;top:391.25px;width:37.90px;height:9.05px;justify-content:center;"><span>01743630</span></div>
<div class="t car" style="left:379.70px;top:391.25px;width:217.30px;height:9.05px;justify-content:flex-start;"><span>BENZ</span></div>
<div class="t " style="left:10.30px;top:399.30px;width:17.00px;height:9.05px;justify-content:center;"><span>8.0</span></div>
<div class="t " style="left:27.30px;top:399.30px;width:25.60px;height:9.05px;justify-content:center;"><span>52</span></div>
<div class="t " style="left:52.90px;top:399.30px;width:22.40px;height:9.05px;justify-content:center;"><span>112</span></div>
<div class="t " style="left:75.30px;top:399.30px;width:23.50px;height:9.05px;justify-content:center;"><span>5</span></div>
<div class="t " style="left:98.80px;top:399.30px;width:28.20px;height:9.05px;justify-content:center;"><span>85-65T</span></div>
<div class="t " style="left:127.00px;top:399.30px;width:22.60px;height:9.05px;justify-content:center;"><span>66.6</span></div>
<div class="t seat" style="left:180.80px;top:399.30px;width:52.20px;height:9.05px;justify-content:center;"><span>60 <b>度テーパー座</b></span></div>
<div class="t p" style="left:233.00px;top:399.30px;width:32.80px;height:9.05px;justify-content:center;"><span>50,000</span></div>
<div class="t c" style="left:265.80px;top:399.30px;width:38.20px;height:9.05px;justify-content:center;"><span>01768795</span></div>
<div class="t p" style="left:304.00px;top:399.30px;width:33.80px;height:9.05px;justify-content:center;"><span>50,000</span></div>
<div class="t c" style="left:337.80px;top:399.30px;width:37.90px;height:9.05px;justify-content:center;"><span>01768796</span></div>
<div class="t car" style="left:379.70px;top:399.30px;width:217.30px;height:9.05px;justify-content:flex-start;"><span>BMW <em>(純正キャップ品番：01-6850834/01-6857149/01-6861092)</em></span></div>
<div class="t " style="left:10.30px;top:408.35px;width:17.00px;height:9.05px;justify-content:center;"><span>8.0</span></div>
<div class="t " style="left:27.30px;top:408.35px;width:25.60px;height:9.05px;justify-content:center;"><span>39</span></div>
<div class="t " style="left:52.90px;top:408.35px;width:22.40px;height:9.05px;justify-content:center;"><span>112</span></div>
<div class="t " style="left:75.30px;top:408.35px;width:23.50px;height:9.05px;justify-content:center;"><span>5</span></div>
<div class="t " style="left:98.80px;top:408.35px;width:28.20px;height:9.05px;justify-content:center;"><span>85-66T</span></div>
<div class="t " style="left:127.00px;top:408.35px;width:22.60px;height:9.05px;justify-content:center;"><span>66.6</span></div>
<div class="t cap" style="left:149.60px;top:408.35px;width:31.20px;height:9.05px;justify-content:center;"><span>J&amp;<i>純正</i></span></div>
<div class="t seat" style="left:180.80px;top:408.35px;width:52.20px;height:9.05px;justify-content:center;"><span><b>球面座</b></span></div>
<div class="t p" style="left:233.00px;top:408.35px;width:32.80px;height:9.05px;justify-content:center;"><span>65,000</span></div>
<div class="t c" style="left:265.80px;top:408.35px;width:38.20px;height:9.05px;justify-content:center;"><span>01768799</span></div>
<div class="t p" style="left:304.00px;top:408.35px;width:33.80px;height:9.05px;justify-content:center;"><span>65,000</span></div>
<div class="t c" style="left:337.80px;top:408.35px;width:37.90px;height:9.05px;justify-content:center;"><span>01768800</span></div>
<div class="t car" style="left:379.70px;top:408.35px;width:217.30px;height:9.05px;justify-content:flex-start;"><span>AUDI <em>(純正キャップ品番：8W0601170)</em></span></div>
<div class="t " style="left:10.30px;top:417.40px;width:17.00px;height:9.05px;justify-content:center;"><span>8.0</span></div>
<div class="t " style="left:27.30px;top:417.40px;width:25.60px;height:9.05px;justify-content:center;"><span>27</span></div>
<div class="t " style="left:52.90px;top:417.40px;width:22.40px;height:9.05px;justify-content:center;"><span>112</span></div>
<div class="t " style="left:75.30px;top:417.40px;width:23.50px;height:9.05px;justify-content:center;"><span>5</span></div>
<div class="t " style="left:98.80px;top:417.40px;width:28.20px;height:9.05px;justify-content:center;"><span>85-67T</span></div>
<div class="t " style="left:127.00px;top:417.40px;width:22.60px;height:9.05px;justify-content:center;"><span>66.6</span></div>
<div class="t seat" style="left:180.80px;top:417.40px;width:52.20px;height:9.05px;justify-content:center;"><span>60 <b>度テーパー座</b></span></div>
<div class="t p" style="left:233.00px;top:417.40px;width:32.80px;height:9.05px;justify-content:center;"><span>65,000</span></div>
<div class="t c" style="left:265.80px;top:417.40px;width:38.20px;height:9.05px;justify-content:center;"><span>01768797</span></div>
<div class="t p" style="left:304.00px;top:417.40px;width:33.80px;height:9.05px;justify-content:center;"><span>65,000</span></div>
<div class="t c" style="left:337.80px;top:417.40px;width:37.90px;height:9.05px;justify-content:center;"><span>01768798</span></div>
<div class="t car" style="left:379.70px;top:417.40px;width:217.30px;height:9.05px;justify-content:flex-start;"><span>BMW <em>(純正キャップ品番：01-6850834/01-6857149/01-6861092)</em></span></div>
<div class="t " style="left:10.30px;top:426.45px;width:17.00px;height:9.05px;justify-content:center;"><span>8.0</span></div>
<div class="t " style="left:27.30px;top:426.45px;width:25.60px;height:9.05px;justify-content:center;"><span>45</span></div>
<div class="t " style="left:52.90px;top:426.45px;width:22.40px;height:9.05px;justify-content:center;"><span>112</span></div>
<div class="t " style="left:75.30px;top:426.45px;width:23.50px;height:9.05px;justify-content:center;"><span>5</span></div>
<div class="t " style="left:98.80px;top:426.45px;width:28.20px;height:9.05px;justify-content:center;"><span>85-68T</span></div>
<div class="t " style="left:127.00px;top:426.45px;width:22.60px;height:9.05px;justify-content:center;"><span>66.6</span></div>
<div class="t seat" style="left:180.80px;top:426.45px;width:52.20px;height:9.05px;justify-content:center;"><span><b>球面座</b></span></div>
<div class="t p" style="left:233.00px;top:426.45px;width:32.80px;height:9.05px;justify-content:center;"><span>65,000</span></div>
<div class="t c" style="left:265.80px;top:426.45px;width:38.20px;height:9.05px;justify-content:center;"><span>01768801</span></div>
<div class="t p" style="left:304.00px;top:426.45px;width:33.80px;height:9.05px;justify-content:center;"><span>65,000</span></div>
<div class="t c" style="left:337.80px;top:426.45px;width:37.90px;height:9.05px;justify-content:center;"><span>01768802</span></div>
<div class="t car" style="left:379.70px;top:426.45px;width:217.30px;height:9.05px;justify-content:flex-start;"><span>BENZ</span></div>
<div class="t " style="left:10.30px;top:435.50px;width:17.00px;height:9.05px;justify-content:center;"><span>8.5</span></div>
<div class="t " style="left:27.30px;top:435.50px;width:25.60px;height:9.05px;justify-content:center;"><span>30</span></div>
<div class="t " style="left:52.90px;top:435.50px;width:22.40px;height:9.05px;justify-content:center;"><span>112</span></div>
<div class="t " style="left:75.30px;top:435.50px;width:23.50px;height:9.05px;justify-content:center;"><span>5</span></div>
<div class="t " style="left:98.80px;top:435.50px;width:28.20px;height:9.05px;justify-content:center;"><span>85-69T</span></div>
<div class="t " style="left:127.00px;top:435.50px;width:22.60px;height:9.05px;justify-content:center;"><span>66.6</span></div>
<div class="t seat" style="left:180.80px;top:435.50px;width:52.20px;height:9.05px;justify-content:center;"><span><b>球面座</b></span></div>
<div class="t p" style="left:233.00px;top:435.50px;width:32.80px;height:9.05px;justify-content:center;"><span>66,000</span></div>
<div class="t c" style="left:265.80px;top:435.50px;width:38.20px;height:9.05px;justify-content:center;"><span>01768803</span></div>
<div class="t p" style="left:304.00px;top:435.50px;width:33.80px;height:9.05px;justify-content:center;"><span>66,000</span></div>
<div class="t c" style="left:337.80px;top:435.50px;width:37.90px;height:9.05px;justify-content:center;"><span>01768804</span></div>
<div class="t car" style="left:379.70px;top:435.50px;width:217.30px;height:9.05px;justify-content:flex-start;"><span>BENZ</span></div>
<div class="t " style="left:10.30px;top:444.55px;width:17.00px;height:9.05px;justify-content:center;"><span>8.5</span></div>
<div class="t " style="left:27.30px;top:444.55px;width:25.60px;height:9.05px;justify-content:center;"><span>32</span></div>
<div class="t " style="left:52.90px;top:444.55px;width:22.40px;height:9.05px;justify-content:center;"><span>112</span></div>
<div class="t " style="left:75.30px;top:444.55px;width:23.50px;height:9.05px;justify-content:center;"><span>5</span></div>
<div class="t " style="left:98.80px;top:444.55px;width:28.20px;height:9.05px;justify-content:center;"><span>85-70T</span></div>
<div class="t " style="left:127.00px;top:444.55px;width:22.60px;height:9.05px;justify-content:center;"><span>66.6</span></div>
<div class="t cap" style="left:149.60px;top:444.55px;width:31.20px;height:9.05px;justify-content:center;"><span>J&amp;<i>純正</i></span></div>
<div class="t seat" style="left:180.80px;top:444.55px;width:52.20px;height:9.05px;justify-content:center;"><span><b>球面座</b></span></div>
<div class="t p" style="left:233.00px;top:444.55px;width:32.80px;height:9.05px;justify-content:center;"><span>66,000</span></div>
<div class="t c" style="left:265.80px;top:444.55px;width:38.20px;height:9.05px;justify-content:center;"><span>01768805</span></div>
<div class="t p" style="left:304.00px;top:444.55px;width:33.80px;height:9.05px;justify-content:center;"><span>66,000</span></div>
<div class="t c" style="left:337.80px;top:444.55px;width:37.90px;height:9.05px;justify-content:center;"><span>01768806</span></div>
<div class="t car" style="left:379.70px;top:444.55px;width:217.30px;height:9.05px;justify-content:flex-start;"><span>AUDI <em>(純正キャップ品番：8W0601170)</em></span></div>
<div class="t " style="left:10.30px;top:453.60px;width:17.00px;height:9.05px;justify-content:center;"><span>8.5</span></div>
<div class="t " style="left:27.30px;top:453.60px;width:25.60px;height:9.05px;justify-content:center;"><span>38</span></div>
<div class="t " style="left:52.90px;top:453.60px;width:22.40px;height:9.05px;justify-content:center;"><span>112</span></div>
<div class="t " style="left:75.30px;top:453.60px;width:23.50px;height:9.05px;justify-content:center;"><span>5</span></div>
<div class="t " style="left:98.80px;top:453.60px;width:28.20px;height:9.05px;justify-content:center;"><span>85-71T</span></div>
<div class="t " style="left:127.00px;top:453.60px;width:22.60px;height:9.05px;justify-content:center;"><span>66.6</span></div>
<div class="t seat" style="left:180.80px;top:453.60px;width:52.20px;height:9.05px;justify-content:center;"><span><b>球面座</b></span></div>
<div class="t p" style="left:233.00px;top:453.60px;width:32.80px;height:9.05px;justify-content:center;"><span>66,000</span></div>
<div class="t c" style="left:265.80px;top:453.60px;width:38.20px;height:9.05px;justify-content:center;"><span>01768807</span></div>
<div class="t p" style="left:304.00px;top:453.60px;width:33.80px;height:9.05px;justify-content:center;"><span>66,000</span></div>
<div class="t c" style="left:337.80px;top:453.60px;width:37.90px;height:9.05px;justify-content:center;"><span>01768808</span></div>
<div class="t car" style="left:379.70px;top:453.60px;width:217.30px;height:9.05px;justify-content:flex-start;"><span>BENZ</span></div>
<div class="f" style="left:2.5px;top:464.30px"><span style="transform:scaleX(0.9059)"><b style="width:5.30px" class="bu k"></b>付属品価格：センターキャップ(E・G・H・I・J・K・L・M・O)¥1,500／カナゴムバルブ¥300</span></div>
<div class="f" style="left:2.5px;top:470.54px"><span style="transform:scaleX(0.8463)"><b style="width:5.67px" class="bu k"></b>フェイスリム：ノーマルリム</span></div>
<div class="f" style="left:2.5px;top:476.78px"><span style="transform:scaleX(0.8741)"><span class="pk">* は車種により、純正以外のボルトやナットが必要な場合がございます。(車下ボルト座・テーパーの違いの為)</span></span></div>
<div class="f" style="left:2.5px;top:483.02px"><span style="transform:scaleX(0.8985)"><b style="width:5.34px" class="bu bl"></b><span class="bl">一部車種(BMW/MINI等)(MINI=R50～R59/R60) 純正キャップ対応</span></span></div>
<div class="f" style="left:162.5px;top:483.02px"><span style="transform:scaleX(0.8243)"><span class="pk">(装着注意) その他には対応しておりません。</span></span></div>
<div class="f" style="left:2.5px;top:489.26px"><span style="transform:scaleX(0.8673)"><b style="width:5.07px" class="sq k"></b>JWL, VIA 規格適合品</span></div>
<div class="f" style="left:2.5px;top:495.50px"><span style="transform:scaleX(0.8162)"><b style="width:5.88px" class="bu bl"></b><span class="bl">センターキャップ、エアーバルブ共に装着済みとなります。</span></span></div>
<div class="f" style="left:2.5px;top:501.74px"><span style="transform:scaleX(0.7948)"><b style="width:6.04px" class="bu k"></b>取付ウェイトの種類・取り付け位置によっては、干渉の恐れがある車種もございます。</span></div>
<div class="f" style="left:9px;top:507.98px"><span style="transform:scaleX(0.7955)"><i style="font-style:normal">その際は、打ち込みウェイトをご使用ください。</i></span></div>
<div class="f" style="left:2.5px;top:514.22px"><span style="transform:scaleX(0.6932)"><b style="width:6.92px" class="bu yl"></b><span class="yl">ハブリングとの組み合わせはご使用になれませんのでご注意ください。</span></span></div></div></body></html>
